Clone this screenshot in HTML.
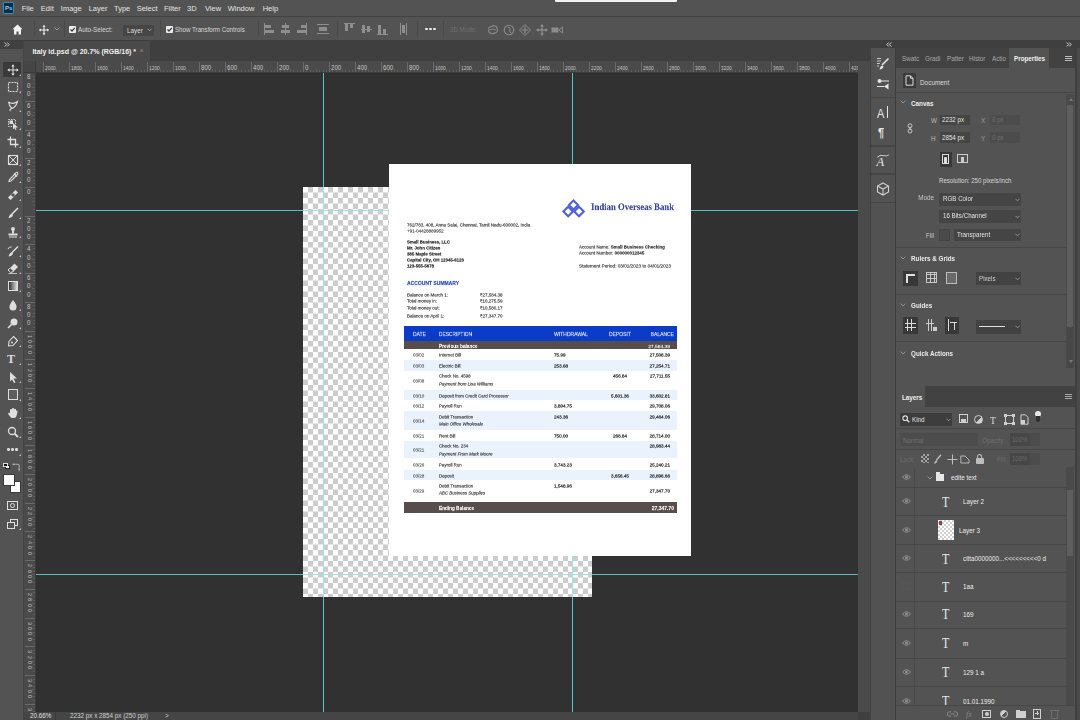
<!DOCTYPE html><html><head><meta charset="utf-8"><style>
*{margin:0;padding:0;box-sizing:border-box}
html,body{width:1080px;height:720px;overflow:hidden;background:#535353;font-family:"Liberation Sans",sans-serif;color:#e6e6e6;position:relative}
div,span,svg{position:absolute}
.t{white-space:nowrap;line-height:1}
.sep{width:1px;background:#4a4a4a}
</style></head><body>
<div style="left:0;top:0;width:1080px;height:16px;background:#535353"></div>
<div style="left:0;top:16px;width:1080px;height:1px;background:#424242"></div>
<div style="left:555px;top:0;width:122px;height:2px;background:#f0f0f0;border-radius:0 0 1px 1px"></div>
<div style="left:3px;top:2px;width:11px;height:12px;background:#0a2a44;border:1px solid #2f8fb8;border-radius:1px"></div>
<span class="t" style="left:5px;top:5px;font-size:6px;font-weight:bold;color:#8fd0ff">Ps</span>
<span class="t" style="left:21.7px;top:5px;font-size:7.5px;color:#e4e4e4">File</span>
<span class="t" style="left:40.8px;top:5px;font-size:7.5px;color:#e4e4e4">Edit</span>
<span class="t" style="left:60.8px;top:5px;font-size:7.5px;color:#e4e4e4">Image</span>
<span class="t" style="left:88.7px;top:5px;font-size:7.5px;color:#e4e4e4">Layer</span>
<span class="t" style="left:114.0px;top:5px;font-size:7.5px;color:#e4e4e4">Type</span>
<span class="t" style="left:136.7px;top:5px;font-size:7.5px;color:#e4e4e4">Select</span>
<span class="t" style="left:164.0px;top:5px;font-size:7.5px;color:#e4e4e4">Filter</span>
<span class="t" style="left:187.0px;top:5px;font-size:7.5px;color:#e4e4e4">3D</span>
<span class="t" style="left:205.0px;top:5px;font-size:7.5px;color:#e4e4e4">View</span>
<span class="t" style="left:227.7px;top:5px;font-size:7.5px;color:#e4e4e4">Window</span>
<span class="t" style="left:262.7px;top:5px;font-size:7.5px;color:#e4e4e4">Help</span>
<div style="left:0;top:17px;width:1080px;height:23px;background:#535353"></div>
<div style="left:0;top:40px;width:1080px;height:1px;background:#3e3e3e"></div>
<div class="sep" style="left:34px;top:20px;height:17px"></div>
<div class="sep" style="left:64px;top:20px;height:17px"></div>
<div class="sep" style="left:160px;top:20px;height:17px"></div>
<div class="sep" style="left:257.5px;top:20px;height:17px"></div>
<div class="sep" style="left:337px;top:20px;height:17px"></div>
<div class="sep" style="left:416.5px;top:20px;height:17px"></div>
<div class="sep" style="left:442.5px;top:20px;height:17px"></div>
<svg style="left:12px;top:24px" width="11" height="11" viewBox="0 0 11 11"><path d="M5.5 0.5 L10.5 5.2 L9 5.2 L9 10.5 L6.5 10.5 L6.5 7.5 L4.5 7.5 L4.5 10.5 L2 10.5 L2 5.2 L0.5 5.2 Z" fill="#f2f2f2"/></svg>
<svg style="left:38.5px;top:24.5px" width="10" height="10" viewBox="0 0 11 11"><path d="M5.5 0.5v10M0.5 5.5h10" stroke="#eee" stroke-width="1.2"/><path d="M5.5 0 L3.8 2 H7.2Z M5.5 11 L3.8 9 H7.2Z M0 5.5 L2 3.8 V7.2Z M11 5.5 L9 3.8 V7.2Z" fill="#eee"/></svg>
<svg style="left:54px;top:27px" width="6" height="4" viewBox="0 0 6 4"><path d="M0.5 0.5 L3 3 L5.5 0.5" stroke="#9a9a9a" fill="none" stroke-width="1"/></svg>
<div style="left:68.5px;top:25.5px;width:7px;height:7px;background:#ececec;border-radius:1px"></div>
<svg style="left:68.5px;top:25.5px" width="7" height="7" viewBox="0 0 7 7"><path d="M1.5 3.5 L3 5 L5.8 1.8" stroke="#3a3a3a" stroke-width="1.2" fill="none"/></svg>
<span class="t" style="left:77.5px;top:26.1px;font-size:7.2px;color:#d8d8d8;transform:scaleX(0.88);transform-origin:0 0">Auto-Select:</span>
<div style="left:122.5px;top:24.5px;width:31px;height:11px;background:#464646"></div>
<span class="t" style="left:127px;top:26.5px;font-size:7px;color:#dcdcdc;transform:scaleX(0.9);transform-origin:0 0">Layer</span>
<svg style="left:147px;top:28px" width="5" height="4" viewBox="0 0 5 4"><path d="M0.5 0.8 L2.5 2.8 L4.5 0.8" stroke="#aaa" fill="none" stroke-width="0.9"/></svg>
<div style="left:165.5px;top:25.5px;width:7px;height:7px;background:#ececec;border-radius:1px"></div>
<svg style="left:165.5px;top:25.5px" width="7" height="7" viewBox="0 0 7 7"><path d="M1.5 3.5 L3 5 L5.8 1.8" stroke="#3a3a3a" stroke-width="1.2" fill="none"/></svg>
<span class="t" style="left:175px;top:26.1px;font-size:7.2px;color:#d8d8d8;transform:scaleX(0.86);transform-origin:0 0">Show Transform Controls</span>
<div style="left:264px;top:23px;width:1px;height:12px;background:#8e8e8e"></div>
<div style="left:265px;top:25px;width:6px;height:3px;background:#8e8e8e"></div>
<div style="left:265px;top:30px;width:9px;height:3px;background:#8e8e8e"></div>
<div style="left:285px;top:23px;width:1px;height:12px;background:#8e8e8e"></div>
<div style="left:282px;top:25px;width:7px;height:3px;background:#8e8e8e"></div>
<div style="left:281px;top:30px;width:9px;height:3px;background:#8e8e8e"></div>
<div style="left:305.5px;top:23px;width:1px;height:12px;background:#8e8e8e"></div>
<div style="left:300.5px;top:25px;width:5px;height:3px;background:#8e8e8e"></div>
<div style="left:296.5px;top:30px;width:9px;height:3px;background:#8e8e8e"></div>
<div style="left:316.5px;top:24px;width:12px;height:1px;background:#8e8e8e"></div>
<div style="left:318.5px;top:27px;width:8px;height:4px;background:#8e8e8e"></div>
<div style="left:316.5px;top:33px;width:12px;height:1px;background:#8e8e8e"></div>
<div style="left:343.5px;top:23px;width:11px;height:1px;background:#8e8e8e"></div>
<div style="left:344.5px;top:24px;width:3px;height:7px;background:#8e8e8e"></div>
<div style="left:349.5px;top:24px;width:3px;height:4px;background:#8e8e8e"></div>
<div style="left:360.6px;top:29px;width:11px;height:1px;background:#8e8e8e"></div>
<div style="left:361.6px;top:25px;width:3px;height:8px;background:#8e8e8e"></div>
<div style="left:366.6px;top:26px;width:3px;height:6px;background:#8e8e8e"></div>
<div style="left:377px;top:34px;width:11px;height:1px;background:#8e8e8e"></div>
<div style="left:378px;top:25px;width:3px;height:9px;background:#8e8e8e"></div>
<div style="left:383px;top:29px;width:3px;height:5px;background:#8e8e8e"></div>
<div style="left:400px;top:23px;width:1px;height:12px;background:#8e8e8e"></div>
<div style="left:402px;top:25px;width:3px;height:8px;background:#8e8e8e"></div>
<div style="left:406px;top:23px;width:1px;height:12px;background:#8e8e8e"></div>
<div style="left:425.1px;top:27.8px;width:2.6px;height:2.6px;border-radius:50%;background:#eee"></div>
<div style="left:429.1px;top:27.8px;width:2.6px;height:2.6px;border-radius:50%;background:#eee"></div>
<div style="left:433.1px;top:27.8px;width:2.6px;height:2.6px;border-radius:50%;background:#eee"></div>
<span class="t" style="left:450px;top:26.2px;font-size:7px;color:#6f6f6f;transform:scaleX(0.88);transform-origin:0 0">3D Mode:</span>
<svg style="left:487px;top:23.5px" width="12" height="12" viewBox="0 0 12 12"><path d="M2 6 Q1 2.5 5 2.5 Q6 1 8 2 Q10.5 2.5 10 5 Q11.5 7 9 8.5 Q6 10.5 3 9 Q1 8 2 6Z" stroke="#8c8c8c" stroke-width="1.1" fill="none"/><path d="M3 6 Q6 4 9 6" stroke="#8c8c8c" stroke-width="0.9" fill="none"/></svg>
<svg style="left:503px;top:23.5px" width="12" height="12" viewBox="0 0 12 12"><circle cx="6" cy="6" r="4.8" stroke="#8c8c8c" stroke-width="1.1" fill="none"/><path d="M4.5 3 Q8 3.5 7 6 Q6 8 8 9" stroke="#8c8c8c" stroke-width="1" fill="none"/></svg>
<svg style="left:519px;top:23.5px" width="12" height="12" viewBox="0 0 12 12"><path d="M6 0.5 L9 3.5 L11.5 6 L9 8.5 L6 11.5 L3 8.5 L0.5 6 L3 3.5Z" stroke="#8c8c8c" stroke-width="1" fill="none"/><path d="M6 2.5 V9.5 M2.5 6 H9.5" stroke="#8c8c8c" stroke-width="1.2"/></svg>
<svg style="left:536px;top:23.5px" width="12" height="12" viewBox="0 0 12 12"><path d="M6 1.5 V10.5 M1.5 6 H10.5" stroke="#8c8c8c" stroke-width="1.3"/><path d="M6 0 L4 2.5 H8Z M6 12 L4 9.5 H8Z M0 6 L2.5 4 V8Z M12 6 L9.5 4 V8Z" fill="#8c8c8c"/></svg>
<svg style="left:551px;top:23.5px" width="12" height="12" viewBox="0 0 12 12"><rect x="0.5" y="3.5" width="7" height="5" fill="#8c8c8c"/><path d="M8 6 L11.5 3 V9Z" stroke="#8c8c8c" stroke-width="1" fill="none"/></svg>
<div style="left:24px;top:41px;width:835px;height:20px;background:#3f3f3f"></div>
<div style="left:24px;top:41px;width:126px;height:20px;background:#4a4a4a"></div>
<span class="t" style="left:32.4px;top:48px;font-size:7px;font-weight:bold;color:#f0f0f0">Italy id.psd @ 20.7% (RGB/16) *</span>
<span class="t" style="left:139.5px;top:47px;font-size:7px;color:#8a8a8a">&#215;</span>
<div style="left:0;top:41px;width:24px;height:679px;background:#535353"></div>
<div style="left:0;top:41px;width:24px;height:8px;background:#404040"></div>
<svg style="left:4px;top:42px" width="6" height="5" viewBox="0 0 6 5"><path d="M0.7 0.5 L2.7 2.5 L0.7 4.5 M3.2 0.5 L5.2 2.5 L3.2 4.5" stroke="#c8c8c8" stroke-width="1" fill="none"/></svg>
<div style="left:23px;top:41px;width:1px;height:679px;background:#444"></div>
<div style="left:3px;top:62px;width:18px;height:15px;background:#3a3a3a;border-radius:1px"></div>
<svg style="left:6.5px;top:63.7px" width="12" height="12" viewBox="0 0 12 12"><path d="M6 1v10M1 6h10" stroke="#dedede" stroke-width="1"/><path d="M6 0.3 L4.3 2.5 H7.7Z M6 11.7 L4.3 9.5 H7.7Z M0.3 6 L2.5 4.3 V7.7Z M11.7 6 L9.5 4.3 V7.7Z" fill="#dedede"/></svg>
<div style="left:18.5px;top:73.7px;width:0;height:0;border-left:2px solid transparent;border-bottom:2px solid #bdbdbd"></div>
<svg style="left:6.5px;top:81.0px" width="12" height="12" viewBox="0 0 12 12"><rect x="1.5" y="1.5" width="9" height="9" stroke="#dedede" stroke-width="1.1" stroke-dasharray="2 1" fill="none"/></svg>
<div style="left:18.5px;top:91.0px;width:0;height:0;border-left:2px solid transparent;border-bottom:2px solid #bdbdbd"></div>
<svg style="left:6.5px;top:99.7px" width="12" height="12" viewBox="0 0 12 12"><path d="M1.5 2 Q6 5 10.5 1.5 Q9 7 5 8.5 Q2 9.5 3.5 11 M1.5 2 Q2 6 5 8.5" stroke="#dedede" stroke-width="1.1" fill="none"/></svg>
<div style="left:18.5px;top:109.7px;width:0;height:0;border-left:2px solid transparent;border-bottom:2px solid #bdbdbd"></div>
<svg style="left:6.5px;top:118.0px" width="12" height="12" viewBox="0 0 12 12"><rect x="1.5" y="1.5" width="7" height="7" stroke="#dedede" stroke-width="0.9" stroke-dasharray="1.5 1" fill="none"/><rect x="2.5" y="2.5" width="3.5" height="3.5" fill="#dedede"/><path d="M6 5 L11 9.5 L8.5 9.5 L9.5 11.5 L8.5 12 L7.5 10 L6 11.5Z" fill="#dedede"/></svg>
<div style="left:18.5px;top:128.0px;width:0;height:0;border-left:2px solid transparent;border-bottom:2px solid #bdbdbd"></div>
<svg style="left:6.5px;top:136.0px" width="12" height="12" viewBox="0 0 12 12"><path d="M3.5 0.5 V8.5 H11.5 M0.5 3.5 H8.5 V11.5" stroke="#dedede" stroke-width="1.3" fill="none"/></svg>
<div style="left:18.5px;top:146.0px;width:0;height:0;border-left:2px solid transparent;border-bottom:2px solid #bdbdbd"></div>
<svg style="left:6.5px;top:153.7px" width="12" height="12" viewBox="0 0 12 12"><rect x="1.5" y="1.5" width="9" height="9" stroke="#dedede" stroke-width="1.1" fill="none"/><path d="M1.5 1.5 L10.5 10.5 M10.5 1.5 L1.5 10.5" stroke="#dedede" stroke-width="1"/></svg>
<div style="left:18.5px;top:163.7px;width:0;height:0;border-left:2px solid transparent;border-bottom:2px solid #bdbdbd"></div>
<svg style="left:6.5px;top:170.7px" width="12" height="12" viewBox="0 0 12 12"><path d="M10.5 1.5 Q11.5 3 9.5 4.5 L4 10 L2 10.5 L2.5 8.5 L8 3 Q9 0.5 10.5 1.5Z" stroke="#dedede" stroke-width="1.1" fill="none"/><path d="M7 2.5 L10 5.5" stroke="#dedede" stroke-width="1.3"/></svg>
<div style="left:18.5px;top:180.7px;width:0;height:0;border-left:2px solid transparent;border-bottom:2px solid #bdbdbd"></div>
<svg style="left:6.5px;top:189.0px" width="12" height="12" viewBox="0 0 12 12"><path d="M8.5 1 L11 3.5 L3.5 11 L1 8.5Z" fill="#dedede"/><rect x="4.5" y="4.5" width="3" height="3" transform="rotate(45 6 6)" fill="#535353"/></svg>
<div style="left:18.5px;top:199.0px;width:0;height:0;border-left:2px solid transparent;border-bottom:2px solid #bdbdbd"></div>
<svg style="left:6.5px;top:207.3px" width="12" height="12" viewBox="0 0 12 12"><path d="M11 1 L5 7" stroke="#dedede" stroke-width="1.6"/><path d="M5 6.5 Q2.5 7 1.5 11 Q5.5 10.5 6 8Z" fill="#dedede"/></svg>
<div style="left:18.5px;top:217.3px;width:0;height:0;border-left:2px solid transparent;border-bottom:2px solid #bdbdbd"></div>
<svg style="left:6.5px;top:225.7px" width="12" height="12" viewBox="0 0 12 12"><circle cx="6" cy="3" r="2" fill="#dedede"/><rect x="5" y="4.5" width="2" height="3" fill="#dedede"/><rect x="1.5" y="7.5" width="9" height="2" fill="#dedede"/><rect x="2" y="10.5" width="8" height="1" fill="#dedede"/></svg>
<div style="left:18.5px;top:235.7px;width:0;height:0;border-left:2px solid transparent;border-bottom:2px solid #bdbdbd"></div>
<svg style="left:6.5px;top:244.7px" width="12" height="12" viewBox="0 0 12 12"><path d="M11 1.5 L5 7.5" stroke="#dedede" stroke-width="1.5"/><path d="M5 7 Q2.5 7.5 1.5 11.5 Q5.5 11 6 8.5Z" fill="#dedede"/><path d="M1 4 Q2 1.5 4.5 2" stroke="#dedede" stroke-width="1" fill="none"/></svg>
<div style="left:18.5px;top:254.7px;width:0;height:0;border-left:2px solid transparent;border-bottom:2px solid #bdbdbd"></div>
<svg style="left:6.5px;top:262.3px" width="12" height="12" viewBox="0 0 12 12"><path d="M7.5 1.5 L11 5 L6.5 9.5 L3 6Z" fill="#dedede"/><path d="M3 6 L1 8 L3.5 10.5 L6.5 9.5" stroke="#dedede" stroke-width="1" fill="none"/><path d="M1.5 11.5 H10" stroke="#dedede" stroke-width="0.8"/></svg>
<div style="left:18.5px;top:272.3px;width:0;height:0;border-left:2px solid transparent;border-bottom:2px solid #bdbdbd"></div>
<div style="left:7.5px;top:280.5px;width:10.5px;height:10.5px;border:1px solid #dedede;background:linear-gradient(90deg,#333,#ddd)"></div>
<div style="left:18.5px;top:289.7px;width:0;height:0;border-left:2px solid transparent;border-bottom:2px solid #bdbdbd"></div>
<svg style="left:6.5px;top:298.5px" width="12" height="12" viewBox="0 0 12 12"><path d="M6 1 Q10 6 9.5 8 A3.5 3.5 0 0 1 2.5 8 Q2 6 6 1Z" fill="#dedede"/></svg>
<div style="left:18.5px;top:308.5px;width:0;height:0;border-left:2px solid transparent;border-bottom:2px solid #bdbdbd"></div>
<svg style="left:6.5px;top:316.5px" width="12" height="12" viewBox="0 0 12 12"><circle cx="7" cy="5" r="3.5" fill="#dedede"/><path d="M4.5 7.5 L1 11" stroke="#dedede" stroke-width="1.6"/></svg>
<div style="left:18.5px;top:326.5px;width:0;height:0;border-left:2px solid transparent;border-bottom:2px solid #bdbdbd"></div>
<svg style="left:6.5px;top:335.2px" width="12" height="12" viewBox="0 0 12 12"><path d="M6.5 1.5 L10.5 5.5 L6 10.5 L1.5 11 L2 6.5Z" stroke="#dedede" stroke-width="1.1" fill="none"/><circle cx="5" cy="7.5" r="1" fill="#dedede"/></svg>
<div style="left:18.5px;top:345.2px;width:0;height:0;border-left:2px solid transparent;border-bottom:2px solid #bdbdbd"></div>
<span class="t" style="left:7px;top:353px;font-size:12px;font-weight:bold;font-family:Liberation Serif;color:#dedede">T</span>
<div style="left:18.5px;top:363.2px;width:0;height:0;border-left:2px solid transparent;border-bottom:2px solid #bdbdbd"></div>
<svg style="left:6.5px;top:370.9px" width="12" height="12" viewBox="0 0 12 12"><path d="M3 1 L10 7.5 L6.5 7.5 L8.5 11.5 L7 12 L5 8.5 L3 10.5Z" fill="#dedede"/></svg>
<div style="left:18.5px;top:380.9px;width:0;height:0;border-left:2px solid transparent;border-bottom:2px solid #bdbdbd"></div>
<div style="left:7.5px;top:389px;width:10.5px;height:10.5px;border:1px solid #dedede;background:#5d5d5d"></div>
<div style="left:18.5px;top:398.5px;width:0;height:0;border-left:2px solid transparent;border-bottom:2px solid #bdbdbd"></div>
<svg style="left:6.5px;top:407.0px" width="12" height="12" viewBox="0 0 12 12"><path d="M3 6 V3 Q3 2 4 2 Q5 2 5 3 V1.8 Q5 1 6 1 Q7 1 7 2 V2.5 Q7.2 1.8 8 1.8 Q9 1.8 9 3 V4 Q9.3 3.3 10 3.5 Q10.8 3.8 10.5 5 L9.5 9 Q9 11 7 11 H5.5 Q4 11 3 9.5 L1.2 7 Q0.8 6 1.8 5.7 Q2.5 5.5 3 6Z" fill="#dedede"/></svg>
<div style="left:18.5px;top:417.0px;width:0;height:0;border-left:2px solid transparent;border-bottom:2px solid #bdbdbd"></div>
<svg style="left:6.5px;top:425.5px" width="12" height="12" viewBox="0 0 12 12"><circle cx="5" cy="5" r="3.5" stroke="#dedede" stroke-width="1.3" fill="none"/><path d="M7.5 7.5 L11 11" stroke="#dedede" stroke-width="1.8"/></svg>
<div style="left:18.5px;top:435.5px;width:0;height:0;border-left:2px solid transparent;border-bottom:2px solid #bdbdbd"></div>
<div style="left:7.3px;top:448.3px;width:2.4px;height:2.4px;border-radius:50%;background:#dedede"></div>
<div style="left:11.3px;top:448.3px;width:2.4px;height:2.4px;border-radius:50%;background:#dedede"></div>
<div style="left:15.3px;top:448.3px;width:2.4px;height:2.4px;border-radius:50%;background:#dedede"></div>
<div style="left:18.5px;top:453.6px;width:0;height:0;border-left:2px solid transparent;border-bottom:2px solid #bdbdbd"></div>
<div style="left:5px;top:464.5px;width:4.5px;height:4.5px;background:#fff;border:0.5px solid #222"></div><div style="left:3px;top:462.5px;width:4.5px;height:4.5px;background:#111;border:0.6px solid #ddd"></div>
<svg style="left:12px;top:461.5px" width="9" height="9" viewBox="0 0 12 12"><path d="M2 3 H8 Q9.5 3 9.5 4.5 V10" stroke="#dedede" stroke-width="0.9" fill="none"/><path d="M2 1.5 V4.5 L0.5 3Z M8 10 H11 L9.5 11.5Z" fill="#dedede"/></svg>
<div style="left:9.5px;top:480.5px;width:11.5px;height:12.5px;background:#fff;border:1px solid #3a3a3a"></div>
<div style="left:3px;top:473.5px;width:11.5px;height:12.5px;background:#fff;border:1px solid #3a3a3a"></div>
<div style="left:7px;top:500.5px;width:11px;height:9.5px;border:1px solid #dedede"></div><div style="left:10px;top:502.5px;width:5px;height:5px;border:1px solid #dedede;border-radius:50%"></div>
<div style="left:9.5px;top:519px;width:8.5px;height:7px;border:1px solid #dedede"></div><div style="left:6.5px;top:522px;width:8.5px;height:7px;border:1px solid #dedede;background:#535353"></div>
<div style="left:18.5px;top:527.5px;width:0;height:0;border-left:2px solid transparent;border-bottom:2px solid #bdbdbd"></div>
<div style="left:24px;top:61px;width:836px;height:12px;background:#4a4a4a"></div>
<div style="left:24px;top:61px;width:12px;height:651px;background:#4a4a4a"></div>
<div style="left:24px;top:61px;width:12px;height:12px;background:#454545"></div>
<div style="left:24px;top:72px;width:836px;height:1px;background:#3a3a3a"></div>
<div style="left:35px;top:61px;width:1px;height:651px;background:#3a3a3a"></div>
<div style="left:43.0px;top:62px;width:1px;height:10px;background:#6a6a6a"></div>
<span class="t" style="left:44.5px;top:66.0px;font-size:5.4px;color:#c4c4c4;transform:scaleX(0.9);transform-origin:0 0">2000</span>
<div style="left:46.2px;top:70px;width:1px;height:2px;background:#5c5c5c"></div>
<div style="left:49.5px;top:70px;width:1px;height:2px;background:#5c5c5c"></div>
<div style="left:52.8px;top:70px;width:1px;height:2px;background:#5c5c5c"></div>
<div style="left:56.0px;top:69px;width:1px;height:3px;background:#5c5c5c"></div>
<div style="left:59.2px;top:70px;width:1px;height:2px;background:#5c5c5c"></div>
<div style="left:62.5px;top:70px;width:1px;height:2px;background:#5c5c5c"></div>
<div style="left:65.8px;top:70px;width:1px;height:2px;background:#5c5c5c"></div>
<div style="left:69.0px;top:62px;width:1px;height:10px;background:#6a6a6a"></div>
<span class="t" style="left:70.5px;top:66.0px;font-size:5.4px;color:#c4c4c4;transform:scaleX(0.9);transform-origin:0 0">1800</span>
<div style="left:72.2px;top:70px;width:1px;height:2px;background:#5c5c5c"></div>
<div style="left:75.5px;top:70px;width:1px;height:2px;background:#5c5c5c"></div>
<div style="left:78.8px;top:70px;width:1px;height:2px;background:#5c5c5c"></div>
<div style="left:82.0px;top:69px;width:1px;height:3px;background:#5c5c5c"></div>
<div style="left:85.2px;top:70px;width:1px;height:2px;background:#5c5c5c"></div>
<div style="left:88.5px;top:70px;width:1px;height:2px;background:#5c5c5c"></div>
<div style="left:91.8px;top:70px;width:1px;height:2px;background:#5c5c5c"></div>
<div style="left:95.0px;top:62px;width:1px;height:10px;background:#6a6a6a"></div>
<span class="t" style="left:96.5px;top:66.0px;font-size:5.4px;color:#c4c4c4;transform:scaleX(0.9);transform-origin:0 0">1600</span>
<div style="left:98.2px;top:70px;width:1px;height:2px;background:#5c5c5c"></div>
<div style="left:101.5px;top:70px;width:1px;height:2px;background:#5c5c5c"></div>
<div style="left:104.8px;top:70px;width:1px;height:2px;background:#5c5c5c"></div>
<div style="left:108.0px;top:69px;width:1px;height:3px;background:#5c5c5c"></div>
<div style="left:111.2px;top:70px;width:1px;height:2px;background:#5c5c5c"></div>
<div style="left:114.5px;top:70px;width:1px;height:2px;background:#5c5c5c"></div>
<div style="left:117.8px;top:70px;width:1px;height:2px;background:#5c5c5c"></div>
<div style="left:121.0px;top:62px;width:1px;height:10px;background:#6a6a6a"></div>
<span class="t" style="left:122.5px;top:66.0px;font-size:5.4px;color:#c4c4c4;transform:scaleX(0.9);transform-origin:0 0">1400</span>
<div style="left:124.2px;top:70px;width:1px;height:2px;background:#5c5c5c"></div>
<div style="left:127.5px;top:70px;width:1px;height:2px;background:#5c5c5c"></div>
<div style="left:130.8px;top:70px;width:1px;height:2px;background:#5c5c5c"></div>
<div style="left:134.0px;top:69px;width:1px;height:3px;background:#5c5c5c"></div>
<div style="left:137.2px;top:70px;width:1px;height:2px;background:#5c5c5c"></div>
<div style="left:140.5px;top:70px;width:1px;height:2px;background:#5c5c5c"></div>
<div style="left:143.8px;top:70px;width:1px;height:2px;background:#5c5c5c"></div>
<div style="left:147.0px;top:62px;width:1px;height:10px;background:#6a6a6a"></div>
<span class="t" style="left:148.5px;top:66.0px;font-size:5.4px;color:#c4c4c4;transform:scaleX(0.9);transform-origin:0 0">1200</span>
<div style="left:150.2px;top:70px;width:1px;height:2px;background:#5c5c5c"></div>
<div style="left:153.5px;top:70px;width:1px;height:2px;background:#5c5c5c"></div>
<div style="left:156.8px;top:70px;width:1px;height:2px;background:#5c5c5c"></div>
<div style="left:160.0px;top:69px;width:1px;height:3px;background:#5c5c5c"></div>
<div style="left:163.2px;top:70px;width:1px;height:2px;background:#5c5c5c"></div>
<div style="left:166.5px;top:70px;width:1px;height:2px;background:#5c5c5c"></div>
<div style="left:169.8px;top:70px;width:1px;height:2px;background:#5c5c5c"></div>
<div style="left:173.0px;top:62px;width:1px;height:10px;background:#6a6a6a"></div>
<span class="t" style="left:174.5px;top:66.0px;font-size:5.4px;color:#c4c4c4;transform:scaleX(0.9);transform-origin:0 0">1000</span>
<div style="left:176.2px;top:70px;width:1px;height:2px;background:#5c5c5c"></div>
<div style="left:179.5px;top:70px;width:1px;height:2px;background:#5c5c5c"></div>
<div style="left:182.8px;top:70px;width:1px;height:2px;background:#5c5c5c"></div>
<div style="left:186.0px;top:69px;width:1px;height:3px;background:#5c5c5c"></div>
<div style="left:189.2px;top:70px;width:1px;height:2px;background:#5c5c5c"></div>
<div style="left:192.5px;top:70px;width:1px;height:2px;background:#5c5c5c"></div>
<div style="left:195.8px;top:70px;width:1px;height:2px;background:#5c5c5c"></div>
<div style="left:199.0px;top:62px;width:1px;height:10px;background:#6a6a6a"></div>
<span class="t" style="left:200.5px;top:65.2px;font-size:6.8px;color:#c4c4c4;transform:scaleX(0.9);transform-origin:0 0">800</span>
<div style="left:202.2px;top:70px;width:1px;height:2px;background:#5c5c5c"></div>
<div style="left:205.5px;top:70px;width:1px;height:2px;background:#5c5c5c"></div>
<div style="left:208.8px;top:70px;width:1px;height:2px;background:#5c5c5c"></div>
<div style="left:212.0px;top:69px;width:1px;height:3px;background:#5c5c5c"></div>
<div style="left:215.2px;top:70px;width:1px;height:2px;background:#5c5c5c"></div>
<div style="left:218.5px;top:70px;width:1px;height:2px;background:#5c5c5c"></div>
<div style="left:221.8px;top:70px;width:1px;height:2px;background:#5c5c5c"></div>
<div style="left:225.0px;top:62px;width:1px;height:10px;background:#6a6a6a"></div>
<span class="t" style="left:226.5px;top:65.2px;font-size:6.8px;color:#c4c4c4;transform:scaleX(0.9);transform-origin:0 0">600</span>
<div style="left:228.2px;top:70px;width:1px;height:2px;background:#5c5c5c"></div>
<div style="left:231.5px;top:70px;width:1px;height:2px;background:#5c5c5c"></div>
<div style="left:234.8px;top:70px;width:1px;height:2px;background:#5c5c5c"></div>
<div style="left:238.0px;top:69px;width:1px;height:3px;background:#5c5c5c"></div>
<div style="left:241.2px;top:70px;width:1px;height:2px;background:#5c5c5c"></div>
<div style="left:244.5px;top:70px;width:1px;height:2px;background:#5c5c5c"></div>
<div style="left:247.8px;top:70px;width:1px;height:2px;background:#5c5c5c"></div>
<div style="left:251.0px;top:62px;width:1px;height:10px;background:#6a6a6a"></div>
<span class="t" style="left:252.5px;top:65.2px;font-size:6.8px;color:#c4c4c4;transform:scaleX(0.9);transform-origin:0 0">400</span>
<div style="left:254.2px;top:70px;width:1px;height:2px;background:#5c5c5c"></div>
<div style="left:257.5px;top:70px;width:1px;height:2px;background:#5c5c5c"></div>
<div style="left:260.8px;top:70px;width:1px;height:2px;background:#5c5c5c"></div>
<div style="left:264.0px;top:69px;width:1px;height:3px;background:#5c5c5c"></div>
<div style="left:267.2px;top:70px;width:1px;height:2px;background:#5c5c5c"></div>
<div style="left:270.5px;top:70px;width:1px;height:2px;background:#5c5c5c"></div>
<div style="left:273.8px;top:70px;width:1px;height:2px;background:#5c5c5c"></div>
<div style="left:277.0px;top:62px;width:1px;height:10px;background:#6a6a6a"></div>
<span class="t" style="left:278.5px;top:65.2px;font-size:6.8px;color:#c4c4c4;transform:scaleX(0.9);transform-origin:0 0">200</span>
<div style="left:280.2px;top:70px;width:1px;height:2px;background:#5c5c5c"></div>
<div style="left:283.5px;top:70px;width:1px;height:2px;background:#5c5c5c"></div>
<div style="left:286.8px;top:70px;width:1px;height:2px;background:#5c5c5c"></div>
<div style="left:290.0px;top:69px;width:1px;height:3px;background:#5c5c5c"></div>
<div style="left:293.2px;top:70px;width:1px;height:2px;background:#5c5c5c"></div>
<div style="left:296.5px;top:70px;width:1px;height:2px;background:#5c5c5c"></div>
<div style="left:299.8px;top:70px;width:1px;height:2px;background:#5c5c5c"></div>
<div style="left:303.0px;top:62px;width:1px;height:10px;background:#6a6a6a"></div>
<span class="t" style="left:304.5px;top:65.2px;font-size:6.8px;color:#c4c4c4;transform:scaleX(0.9);transform-origin:0 0">0</span>
<div style="left:306.2px;top:70px;width:1px;height:2px;background:#5c5c5c"></div>
<div style="left:309.5px;top:70px;width:1px;height:2px;background:#5c5c5c"></div>
<div style="left:312.8px;top:70px;width:1px;height:2px;background:#5c5c5c"></div>
<div style="left:316.0px;top:69px;width:1px;height:3px;background:#5c5c5c"></div>
<div style="left:319.2px;top:70px;width:1px;height:2px;background:#5c5c5c"></div>
<div style="left:322.5px;top:70px;width:1px;height:2px;background:#5c5c5c"></div>
<div style="left:325.8px;top:70px;width:1px;height:2px;background:#5c5c5c"></div>
<div style="left:329.0px;top:62px;width:1px;height:10px;background:#6a6a6a"></div>
<span class="t" style="left:330.5px;top:65.2px;font-size:6.8px;color:#c4c4c4;transform:scaleX(0.9);transform-origin:0 0">200</span>
<div style="left:332.2px;top:70px;width:1px;height:2px;background:#5c5c5c"></div>
<div style="left:335.5px;top:70px;width:1px;height:2px;background:#5c5c5c"></div>
<div style="left:338.8px;top:70px;width:1px;height:2px;background:#5c5c5c"></div>
<div style="left:342.0px;top:69px;width:1px;height:3px;background:#5c5c5c"></div>
<div style="left:345.2px;top:70px;width:1px;height:2px;background:#5c5c5c"></div>
<div style="left:348.5px;top:70px;width:1px;height:2px;background:#5c5c5c"></div>
<div style="left:351.8px;top:70px;width:1px;height:2px;background:#5c5c5c"></div>
<div style="left:355.0px;top:62px;width:1px;height:10px;background:#6a6a6a"></div>
<span class="t" style="left:356.5px;top:65.2px;font-size:6.8px;color:#c4c4c4;transform:scaleX(0.9);transform-origin:0 0">400</span>
<div style="left:358.2px;top:70px;width:1px;height:2px;background:#5c5c5c"></div>
<div style="left:361.5px;top:70px;width:1px;height:2px;background:#5c5c5c"></div>
<div style="left:364.8px;top:70px;width:1px;height:2px;background:#5c5c5c"></div>
<div style="left:368.0px;top:69px;width:1px;height:3px;background:#5c5c5c"></div>
<div style="left:371.2px;top:70px;width:1px;height:2px;background:#5c5c5c"></div>
<div style="left:374.5px;top:70px;width:1px;height:2px;background:#5c5c5c"></div>
<div style="left:377.8px;top:70px;width:1px;height:2px;background:#5c5c5c"></div>
<div style="left:381.0px;top:62px;width:1px;height:10px;background:#6a6a6a"></div>
<span class="t" style="left:382.5px;top:65.2px;font-size:6.8px;color:#c4c4c4;transform:scaleX(0.9);transform-origin:0 0">600</span>
<div style="left:384.2px;top:70px;width:1px;height:2px;background:#5c5c5c"></div>
<div style="left:387.5px;top:70px;width:1px;height:2px;background:#5c5c5c"></div>
<div style="left:390.8px;top:70px;width:1px;height:2px;background:#5c5c5c"></div>
<div style="left:394.0px;top:69px;width:1px;height:3px;background:#5c5c5c"></div>
<div style="left:397.2px;top:70px;width:1px;height:2px;background:#5c5c5c"></div>
<div style="left:400.5px;top:70px;width:1px;height:2px;background:#5c5c5c"></div>
<div style="left:403.8px;top:70px;width:1px;height:2px;background:#5c5c5c"></div>
<div style="left:407.0px;top:62px;width:1px;height:10px;background:#6a6a6a"></div>
<span class="t" style="left:408.5px;top:65.2px;font-size:6.8px;color:#c4c4c4;transform:scaleX(0.9);transform-origin:0 0">800</span>
<div style="left:410.2px;top:70px;width:1px;height:2px;background:#5c5c5c"></div>
<div style="left:413.5px;top:70px;width:1px;height:2px;background:#5c5c5c"></div>
<div style="left:416.8px;top:70px;width:1px;height:2px;background:#5c5c5c"></div>
<div style="left:420.0px;top:69px;width:1px;height:3px;background:#5c5c5c"></div>
<div style="left:423.2px;top:70px;width:1px;height:2px;background:#5c5c5c"></div>
<div style="left:426.5px;top:70px;width:1px;height:2px;background:#5c5c5c"></div>
<div style="left:429.8px;top:70px;width:1px;height:2px;background:#5c5c5c"></div>
<div style="left:433.0px;top:62px;width:1px;height:10px;background:#6a6a6a"></div>
<span class="t" style="left:434.5px;top:66.0px;font-size:5.4px;color:#c4c4c4;transform:scaleX(0.9);transform-origin:0 0">1000</span>
<div style="left:436.2px;top:70px;width:1px;height:2px;background:#5c5c5c"></div>
<div style="left:439.5px;top:70px;width:1px;height:2px;background:#5c5c5c"></div>
<div style="left:442.8px;top:70px;width:1px;height:2px;background:#5c5c5c"></div>
<div style="left:446.0px;top:69px;width:1px;height:3px;background:#5c5c5c"></div>
<div style="left:449.2px;top:70px;width:1px;height:2px;background:#5c5c5c"></div>
<div style="left:452.5px;top:70px;width:1px;height:2px;background:#5c5c5c"></div>
<div style="left:455.8px;top:70px;width:1px;height:2px;background:#5c5c5c"></div>
<div style="left:459.0px;top:62px;width:1px;height:10px;background:#6a6a6a"></div>
<span class="t" style="left:460.5px;top:66.0px;font-size:5.4px;color:#c4c4c4;transform:scaleX(0.9);transform-origin:0 0">1200</span>
<div style="left:462.2px;top:70px;width:1px;height:2px;background:#5c5c5c"></div>
<div style="left:465.5px;top:70px;width:1px;height:2px;background:#5c5c5c"></div>
<div style="left:468.8px;top:70px;width:1px;height:2px;background:#5c5c5c"></div>
<div style="left:472.0px;top:69px;width:1px;height:3px;background:#5c5c5c"></div>
<div style="left:475.2px;top:70px;width:1px;height:2px;background:#5c5c5c"></div>
<div style="left:478.5px;top:70px;width:1px;height:2px;background:#5c5c5c"></div>
<div style="left:481.8px;top:70px;width:1px;height:2px;background:#5c5c5c"></div>
<div style="left:485.0px;top:62px;width:1px;height:10px;background:#6a6a6a"></div>
<span class="t" style="left:486.5px;top:66.0px;font-size:5.4px;color:#c4c4c4;transform:scaleX(0.9);transform-origin:0 0">1400</span>
<div style="left:488.2px;top:70px;width:1px;height:2px;background:#5c5c5c"></div>
<div style="left:491.5px;top:70px;width:1px;height:2px;background:#5c5c5c"></div>
<div style="left:494.8px;top:70px;width:1px;height:2px;background:#5c5c5c"></div>
<div style="left:498.0px;top:69px;width:1px;height:3px;background:#5c5c5c"></div>
<div style="left:501.2px;top:70px;width:1px;height:2px;background:#5c5c5c"></div>
<div style="left:504.5px;top:70px;width:1px;height:2px;background:#5c5c5c"></div>
<div style="left:507.8px;top:70px;width:1px;height:2px;background:#5c5c5c"></div>
<div style="left:511.0px;top:62px;width:1px;height:10px;background:#6a6a6a"></div>
<span class="t" style="left:512.5px;top:66.0px;font-size:5.4px;color:#c4c4c4;transform:scaleX(0.9);transform-origin:0 0">1600</span>
<div style="left:514.2px;top:70px;width:1px;height:2px;background:#5c5c5c"></div>
<div style="left:517.5px;top:70px;width:1px;height:2px;background:#5c5c5c"></div>
<div style="left:520.8px;top:70px;width:1px;height:2px;background:#5c5c5c"></div>
<div style="left:524.0px;top:69px;width:1px;height:3px;background:#5c5c5c"></div>
<div style="left:527.2px;top:70px;width:1px;height:2px;background:#5c5c5c"></div>
<div style="left:530.5px;top:70px;width:1px;height:2px;background:#5c5c5c"></div>
<div style="left:533.8px;top:70px;width:1px;height:2px;background:#5c5c5c"></div>
<div style="left:537.0px;top:62px;width:1px;height:10px;background:#6a6a6a"></div>
<span class="t" style="left:538.5px;top:66.0px;font-size:5.4px;color:#c4c4c4;transform:scaleX(0.9);transform-origin:0 0">1800</span>
<div style="left:540.2px;top:70px;width:1px;height:2px;background:#5c5c5c"></div>
<div style="left:543.5px;top:70px;width:1px;height:2px;background:#5c5c5c"></div>
<div style="left:546.8px;top:70px;width:1px;height:2px;background:#5c5c5c"></div>
<div style="left:550.0px;top:69px;width:1px;height:3px;background:#5c5c5c"></div>
<div style="left:553.2px;top:70px;width:1px;height:2px;background:#5c5c5c"></div>
<div style="left:556.5px;top:70px;width:1px;height:2px;background:#5c5c5c"></div>
<div style="left:559.8px;top:70px;width:1px;height:2px;background:#5c5c5c"></div>
<div style="left:563.0px;top:62px;width:1px;height:10px;background:#6a6a6a"></div>
<span class="t" style="left:564.5px;top:66.0px;font-size:5.4px;color:#c4c4c4;transform:scaleX(0.9);transform-origin:0 0">2000</span>
<div style="left:566.2px;top:70px;width:1px;height:2px;background:#5c5c5c"></div>
<div style="left:569.5px;top:70px;width:1px;height:2px;background:#5c5c5c"></div>
<div style="left:572.8px;top:70px;width:1px;height:2px;background:#5c5c5c"></div>
<div style="left:576.0px;top:69px;width:1px;height:3px;background:#5c5c5c"></div>
<div style="left:579.2px;top:70px;width:1px;height:2px;background:#5c5c5c"></div>
<div style="left:582.5px;top:70px;width:1px;height:2px;background:#5c5c5c"></div>
<div style="left:585.8px;top:70px;width:1px;height:2px;background:#5c5c5c"></div>
<div style="left:589.0px;top:62px;width:1px;height:10px;background:#6a6a6a"></div>
<span class="t" style="left:590.5px;top:66.0px;font-size:5.4px;color:#c4c4c4;transform:scaleX(0.9);transform-origin:0 0">2200</span>
<div style="left:592.2px;top:70px;width:1px;height:2px;background:#5c5c5c"></div>
<div style="left:595.5px;top:70px;width:1px;height:2px;background:#5c5c5c"></div>
<div style="left:598.8px;top:70px;width:1px;height:2px;background:#5c5c5c"></div>
<div style="left:602.0px;top:69px;width:1px;height:3px;background:#5c5c5c"></div>
<div style="left:605.2px;top:70px;width:1px;height:2px;background:#5c5c5c"></div>
<div style="left:608.5px;top:70px;width:1px;height:2px;background:#5c5c5c"></div>
<div style="left:611.8px;top:70px;width:1px;height:2px;background:#5c5c5c"></div>
<div style="left:615.0px;top:62px;width:1px;height:10px;background:#6a6a6a"></div>
<span class="t" style="left:616.5px;top:66.0px;font-size:5.4px;color:#c4c4c4;transform:scaleX(0.9);transform-origin:0 0">2400</span>
<div style="left:618.2px;top:70px;width:1px;height:2px;background:#5c5c5c"></div>
<div style="left:621.5px;top:70px;width:1px;height:2px;background:#5c5c5c"></div>
<div style="left:624.8px;top:70px;width:1px;height:2px;background:#5c5c5c"></div>
<div style="left:628.0px;top:69px;width:1px;height:3px;background:#5c5c5c"></div>
<div style="left:631.2px;top:70px;width:1px;height:2px;background:#5c5c5c"></div>
<div style="left:634.5px;top:70px;width:1px;height:2px;background:#5c5c5c"></div>
<div style="left:637.8px;top:70px;width:1px;height:2px;background:#5c5c5c"></div>
<div style="left:641.0px;top:62px;width:1px;height:10px;background:#6a6a6a"></div>
<span class="t" style="left:642.5px;top:66.0px;font-size:5.4px;color:#c4c4c4;transform:scaleX(0.9);transform-origin:0 0">2600</span>
<div style="left:644.2px;top:70px;width:1px;height:2px;background:#5c5c5c"></div>
<div style="left:647.5px;top:70px;width:1px;height:2px;background:#5c5c5c"></div>
<div style="left:650.8px;top:70px;width:1px;height:2px;background:#5c5c5c"></div>
<div style="left:654.0px;top:69px;width:1px;height:3px;background:#5c5c5c"></div>
<div style="left:657.2px;top:70px;width:1px;height:2px;background:#5c5c5c"></div>
<div style="left:660.5px;top:70px;width:1px;height:2px;background:#5c5c5c"></div>
<div style="left:663.8px;top:70px;width:1px;height:2px;background:#5c5c5c"></div>
<div style="left:667.0px;top:62px;width:1px;height:10px;background:#6a6a6a"></div>
<span class="t" style="left:668.5px;top:66.0px;font-size:5.4px;color:#c4c4c4;transform:scaleX(0.9);transform-origin:0 0">2800</span>
<div style="left:670.2px;top:70px;width:1px;height:2px;background:#5c5c5c"></div>
<div style="left:673.5px;top:70px;width:1px;height:2px;background:#5c5c5c"></div>
<div style="left:676.8px;top:70px;width:1px;height:2px;background:#5c5c5c"></div>
<div style="left:680.0px;top:69px;width:1px;height:3px;background:#5c5c5c"></div>
<div style="left:683.2px;top:70px;width:1px;height:2px;background:#5c5c5c"></div>
<div style="left:686.5px;top:70px;width:1px;height:2px;background:#5c5c5c"></div>
<div style="left:689.8px;top:70px;width:1px;height:2px;background:#5c5c5c"></div>
<div style="left:693.0px;top:62px;width:1px;height:10px;background:#6a6a6a"></div>
<span class="t" style="left:694.5px;top:66.0px;font-size:5.4px;color:#c4c4c4;transform:scaleX(0.9);transform-origin:0 0">3000</span>
<div style="left:696.2px;top:70px;width:1px;height:2px;background:#5c5c5c"></div>
<div style="left:699.5px;top:70px;width:1px;height:2px;background:#5c5c5c"></div>
<div style="left:702.8px;top:70px;width:1px;height:2px;background:#5c5c5c"></div>
<div style="left:706.0px;top:69px;width:1px;height:3px;background:#5c5c5c"></div>
<div style="left:709.2px;top:70px;width:1px;height:2px;background:#5c5c5c"></div>
<div style="left:712.5px;top:70px;width:1px;height:2px;background:#5c5c5c"></div>
<div style="left:715.8px;top:70px;width:1px;height:2px;background:#5c5c5c"></div>
<div style="left:719.0px;top:62px;width:1px;height:10px;background:#6a6a6a"></div>
<span class="t" style="left:720.5px;top:66.0px;font-size:5.4px;color:#c4c4c4;transform:scaleX(0.9);transform-origin:0 0">3200</span>
<div style="left:722.2px;top:70px;width:1px;height:2px;background:#5c5c5c"></div>
<div style="left:725.5px;top:70px;width:1px;height:2px;background:#5c5c5c"></div>
<div style="left:728.8px;top:70px;width:1px;height:2px;background:#5c5c5c"></div>
<div style="left:732.0px;top:69px;width:1px;height:3px;background:#5c5c5c"></div>
<div style="left:735.2px;top:70px;width:1px;height:2px;background:#5c5c5c"></div>
<div style="left:738.5px;top:70px;width:1px;height:2px;background:#5c5c5c"></div>
<div style="left:741.8px;top:70px;width:1px;height:2px;background:#5c5c5c"></div>
<div style="left:745.0px;top:62px;width:1px;height:10px;background:#6a6a6a"></div>
<span class="t" style="left:746.5px;top:66.0px;font-size:5.4px;color:#c4c4c4;transform:scaleX(0.9);transform-origin:0 0">3400</span>
<div style="left:748.2px;top:70px;width:1px;height:2px;background:#5c5c5c"></div>
<div style="left:751.5px;top:70px;width:1px;height:2px;background:#5c5c5c"></div>
<div style="left:754.8px;top:70px;width:1px;height:2px;background:#5c5c5c"></div>
<div style="left:758.0px;top:69px;width:1px;height:3px;background:#5c5c5c"></div>
<div style="left:761.2px;top:70px;width:1px;height:2px;background:#5c5c5c"></div>
<div style="left:764.5px;top:70px;width:1px;height:2px;background:#5c5c5c"></div>
<div style="left:767.8px;top:70px;width:1px;height:2px;background:#5c5c5c"></div>
<div style="left:771.0px;top:62px;width:1px;height:10px;background:#6a6a6a"></div>
<span class="t" style="left:772.5px;top:66.0px;font-size:5.4px;color:#c4c4c4;transform:scaleX(0.9);transform-origin:0 0">3600</span>
<div style="left:774.2px;top:70px;width:1px;height:2px;background:#5c5c5c"></div>
<div style="left:777.5px;top:70px;width:1px;height:2px;background:#5c5c5c"></div>
<div style="left:780.8px;top:70px;width:1px;height:2px;background:#5c5c5c"></div>
<div style="left:784.0px;top:69px;width:1px;height:3px;background:#5c5c5c"></div>
<div style="left:787.2px;top:70px;width:1px;height:2px;background:#5c5c5c"></div>
<div style="left:790.5px;top:70px;width:1px;height:2px;background:#5c5c5c"></div>
<div style="left:793.8px;top:70px;width:1px;height:2px;background:#5c5c5c"></div>
<div style="left:797.0px;top:62px;width:1px;height:10px;background:#6a6a6a"></div>
<span class="t" style="left:798.5px;top:66.0px;font-size:5.4px;color:#c4c4c4;transform:scaleX(0.9);transform-origin:0 0">3800</span>
<div style="left:800.2px;top:70px;width:1px;height:2px;background:#5c5c5c"></div>
<div style="left:803.5px;top:70px;width:1px;height:2px;background:#5c5c5c"></div>
<div style="left:806.8px;top:70px;width:1px;height:2px;background:#5c5c5c"></div>
<div style="left:810.0px;top:69px;width:1px;height:3px;background:#5c5c5c"></div>
<div style="left:813.2px;top:70px;width:1px;height:2px;background:#5c5c5c"></div>
<div style="left:816.5px;top:70px;width:1px;height:2px;background:#5c5c5c"></div>
<div style="left:819.8px;top:70px;width:1px;height:2px;background:#5c5c5c"></div>
<div style="left:823.0px;top:62px;width:1px;height:10px;background:#6a6a6a"></div>
<span class="t" style="left:824.5px;top:66.0px;font-size:5.4px;color:#c4c4c4;transform:scaleX(0.9);transform-origin:0 0">4000</span>
<div style="left:826.2px;top:70px;width:1px;height:2px;background:#5c5c5c"></div>
<div style="left:829.5px;top:70px;width:1px;height:2px;background:#5c5c5c"></div>
<div style="left:832.8px;top:70px;width:1px;height:2px;background:#5c5c5c"></div>
<div style="left:836.0px;top:69px;width:1px;height:3px;background:#5c5c5c"></div>
<div style="left:839.2px;top:70px;width:1px;height:2px;background:#5c5c5c"></div>
<div style="left:842.5px;top:70px;width:1px;height:2px;background:#5c5c5c"></div>
<div style="left:845.8px;top:70px;width:1px;height:2px;background:#5c5c5c"></div>
<div style="left:849.0px;top:62px;width:1px;height:10px;background:#6a6a6a"></div>
<span class="t" style="left:850.5px;top:66.0px;font-size:5.4px;color:#c4c4c4;transform:scaleX(0.9);transform-origin:0 0">4200</span>
<div style="left:852.2px;top:70px;width:1px;height:2px;background:#5c5c5c"></div>
<div style="left:855.5px;top:70px;width:1px;height:2px;background:#5c5c5c"></div>
<span class="t" style="left:27px;top:74.2px;font-size:6.8px;color:#c4c4c4;transform:scaleX(0.9);transform-origin:0 0">8</span>
<span class="t" style="left:27px;top:82.5px;font-size:6.8px;color:#c4c4c4;transform:scaleX(0.9);transform-origin:0 0">0</span>
<span class="t" style="left:27px;top:90.8px;font-size:6.8px;color:#c4c4c4;transform:scaleX(0.9);transform-origin:0 0">0</span>
<div style="left:33px;top:75.8px;width:2px;height:1px;background:#5c5c5c"></div>
<div style="left:33px;top:79.4px;width:2px;height:1px;background:#5c5c5c"></div>
<div style="left:33px;top:83.0px;width:2px;height:1px;background:#5c5c5c"></div>
<div style="left:32px;top:86.5px;width:3px;height:1px;background:#5c5c5c"></div>
<div style="left:33px;top:90.1px;width:2px;height:1px;background:#5c5c5c"></div>
<div style="left:33px;top:93.7px;width:2px;height:1px;background:#5c5c5c"></div>
<div style="left:33px;top:97.3px;width:2px;height:1px;background:#5c5c5c"></div>
<div style="left:25px;top:100.9px;width:10px;height:1px;background:#6a6a6a"></div>
<span class="t" style="left:27px;top:102.9px;font-size:6.8px;color:#c4c4c4;transform:scaleX(0.9);transform-origin:0 0">6</span>
<span class="t" style="left:27px;top:111.2px;font-size:6.8px;color:#c4c4c4;transform:scaleX(0.9);transform-origin:0 0">0</span>
<span class="t" style="left:27px;top:119.5px;font-size:6.8px;color:#c4c4c4;transform:scaleX(0.9);transform-origin:0 0">0</span>
<div style="left:33px;top:104.5px;width:2px;height:1px;background:#5c5c5c"></div>
<div style="left:33px;top:108.1px;width:2px;height:1px;background:#5c5c5c"></div>
<div style="left:33px;top:111.7px;width:2px;height:1px;background:#5c5c5c"></div>
<div style="left:32px;top:115.2px;width:3px;height:1px;background:#5c5c5c"></div>
<div style="left:33px;top:118.8px;width:2px;height:1px;background:#5c5c5c"></div>
<div style="left:33px;top:122.4px;width:2px;height:1px;background:#5c5c5c"></div>
<div style="left:33px;top:126.0px;width:2px;height:1px;background:#5c5c5c"></div>
<div style="left:25px;top:129.6px;width:10px;height:1px;background:#6a6a6a"></div>
<span class="t" style="left:27px;top:131.6px;font-size:6.8px;color:#c4c4c4;transform:scaleX(0.9);transform-origin:0 0">4</span>
<span class="t" style="left:27px;top:139.9px;font-size:6.8px;color:#c4c4c4;transform:scaleX(0.9);transform-origin:0 0">0</span>
<span class="t" style="left:27px;top:148.2px;font-size:6.8px;color:#c4c4c4;transform:scaleX(0.9);transform-origin:0 0">0</span>
<div style="left:33px;top:133.2px;width:2px;height:1px;background:#5c5c5c"></div>
<div style="left:33px;top:136.8px;width:2px;height:1px;background:#5c5c5c"></div>
<div style="left:33px;top:140.4px;width:2px;height:1px;background:#5c5c5c"></div>
<div style="left:32px;top:143.9px;width:3px;height:1px;background:#5c5c5c"></div>
<div style="left:33px;top:147.5px;width:2px;height:1px;background:#5c5c5c"></div>
<div style="left:33px;top:151.1px;width:2px;height:1px;background:#5c5c5c"></div>
<div style="left:33px;top:154.7px;width:2px;height:1px;background:#5c5c5c"></div>
<div style="left:25px;top:158.3px;width:10px;height:1px;background:#6a6a6a"></div>
<span class="t" style="left:27px;top:160.3px;font-size:6.8px;color:#c4c4c4;transform:scaleX(0.9);transform-origin:0 0">2</span>
<span class="t" style="left:27px;top:168.6px;font-size:6.8px;color:#c4c4c4;transform:scaleX(0.9);transform-origin:0 0">0</span>
<span class="t" style="left:27px;top:176.9px;font-size:6.8px;color:#c4c4c4;transform:scaleX(0.9);transform-origin:0 0">0</span>
<div style="left:33px;top:161.9px;width:2px;height:1px;background:#5c5c5c"></div>
<div style="left:33px;top:165.5px;width:2px;height:1px;background:#5c5c5c"></div>
<div style="left:33px;top:169.1px;width:2px;height:1px;background:#5c5c5c"></div>
<div style="left:32px;top:172.7px;width:3px;height:1px;background:#5c5c5c"></div>
<div style="left:33px;top:176.2px;width:2px;height:1px;background:#5c5c5c"></div>
<div style="left:33px;top:179.8px;width:2px;height:1px;background:#5c5c5c"></div>
<div style="left:33px;top:183.4px;width:2px;height:1px;background:#5c5c5c"></div>
<div style="left:25px;top:187.0px;width:10px;height:1px;background:#6a6a6a"></div>
<span class="t" style="left:27px;top:189.0px;font-size:6.8px;color:#c4c4c4;transform:scaleX(0.9);transform-origin:0 0">0</span>
<div style="left:33px;top:190.6px;width:2px;height:1px;background:#5c5c5c"></div>
<div style="left:33px;top:194.2px;width:2px;height:1px;background:#5c5c5c"></div>
<div style="left:33px;top:197.8px;width:2px;height:1px;background:#5c5c5c"></div>
<div style="left:32px;top:201.3px;width:3px;height:1px;background:#5c5c5c"></div>
<div style="left:33px;top:204.9px;width:2px;height:1px;background:#5c5c5c"></div>
<div style="left:33px;top:208.5px;width:2px;height:1px;background:#5c5c5c"></div>
<div style="left:33px;top:212.1px;width:2px;height:1px;background:#5c5c5c"></div>
<div style="left:25px;top:215.7px;width:10px;height:1px;background:#6a6a6a"></div>
<span class="t" style="left:27px;top:217.7px;font-size:6.8px;color:#c4c4c4;transform:scaleX(0.9);transform-origin:0 0">2</span>
<span class="t" style="left:27px;top:226.0px;font-size:6.8px;color:#c4c4c4;transform:scaleX(0.9);transform-origin:0 0">0</span>
<span class="t" style="left:27px;top:234.3px;font-size:6.8px;color:#c4c4c4;transform:scaleX(0.9);transform-origin:0 0">0</span>
<div style="left:33px;top:219.3px;width:2px;height:1px;background:#5c5c5c"></div>
<div style="left:33px;top:222.9px;width:2px;height:1px;background:#5c5c5c"></div>
<div style="left:33px;top:226.5px;width:2px;height:1px;background:#5c5c5c"></div>
<div style="left:32px;top:230.0px;width:3px;height:1px;background:#5c5c5c"></div>
<div style="left:33px;top:233.6px;width:2px;height:1px;background:#5c5c5c"></div>
<div style="left:33px;top:237.2px;width:2px;height:1px;background:#5c5c5c"></div>
<div style="left:33px;top:240.8px;width:2px;height:1px;background:#5c5c5c"></div>
<div style="left:25px;top:244.4px;width:10px;height:1px;background:#6a6a6a"></div>
<span class="t" style="left:27px;top:246.4px;font-size:6.8px;color:#c4c4c4;transform:scaleX(0.9);transform-origin:0 0">4</span>
<span class="t" style="left:27px;top:254.7px;font-size:6.8px;color:#c4c4c4;transform:scaleX(0.9);transform-origin:0 0">0</span>
<span class="t" style="left:27px;top:263.0px;font-size:6.8px;color:#c4c4c4;transform:scaleX(0.9);transform-origin:0 0">0</span>
<div style="left:33px;top:248.0px;width:2px;height:1px;background:#5c5c5c"></div>
<div style="left:33px;top:251.6px;width:2px;height:1px;background:#5c5c5c"></div>
<div style="left:33px;top:255.2px;width:2px;height:1px;background:#5c5c5c"></div>
<div style="left:32px;top:258.8px;width:3px;height:1px;background:#5c5c5c"></div>
<div style="left:33px;top:262.3px;width:2px;height:1px;background:#5c5c5c"></div>
<div style="left:33px;top:265.9px;width:2px;height:1px;background:#5c5c5c"></div>
<div style="left:33px;top:269.5px;width:2px;height:1px;background:#5c5c5c"></div>
<div style="left:25px;top:273.1px;width:10px;height:1px;background:#6a6a6a"></div>
<span class="t" style="left:27px;top:275.1px;font-size:6.8px;color:#c4c4c4;transform:scaleX(0.9);transform-origin:0 0">6</span>
<span class="t" style="left:27px;top:283.4px;font-size:6.8px;color:#c4c4c4;transform:scaleX(0.9);transform-origin:0 0">0</span>
<span class="t" style="left:27px;top:291.7px;font-size:6.8px;color:#c4c4c4;transform:scaleX(0.9);transform-origin:0 0">0</span>
<div style="left:33px;top:276.7px;width:2px;height:1px;background:#5c5c5c"></div>
<div style="left:33px;top:280.3px;width:2px;height:1px;background:#5c5c5c"></div>
<div style="left:33px;top:283.9px;width:2px;height:1px;background:#5c5c5c"></div>
<div style="left:32px;top:287.5px;width:3px;height:1px;background:#5c5c5c"></div>
<div style="left:33px;top:291.0px;width:2px;height:1px;background:#5c5c5c"></div>
<div style="left:33px;top:294.6px;width:2px;height:1px;background:#5c5c5c"></div>
<div style="left:33px;top:298.2px;width:2px;height:1px;background:#5c5c5c"></div>
<div style="left:25px;top:301.8px;width:10px;height:1px;background:#6a6a6a"></div>
<span class="t" style="left:27px;top:303.8px;font-size:6.8px;color:#c4c4c4;transform:scaleX(0.9);transform-origin:0 0">8</span>
<span class="t" style="left:27px;top:312.1px;font-size:6.8px;color:#c4c4c4;transform:scaleX(0.9);transform-origin:0 0">0</span>
<span class="t" style="left:27px;top:320.4px;font-size:6.8px;color:#c4c4c4;transform:scaleX(0.9);transform-origin:0 0">0</span>
<div style="left:33px;top:305.4px;width:2px;height:1px;background:#5c5c5c"></div>
<div style="left:33px;top:309.0px;width:2px;height:1px;background:#5c5c5c"></div>
<div style="left:33px;top:312.6px;width:2px;height:1px;background:#5c5c5c"></div>
<div style="left:32px;top:316.2px;width:3px;height:1px;background:#5c5c5c"></div>
<div style="left:33px;top:319.7px;width:2px;height:1px;background:#5c5c5c"></div>
<div style="left:33px;top:323.3px;width:2px;height:1px;background:#5c5c5c"></div>
<div style="left:33px;top:326.9px;width:2px;height:1px;background:#5c5c5c"></div>
<div style="left:25px;top:330.5px;width:10px;height:1px;background:#6a6a6a"></div>
<span class="t" style="left:26.8px;top:334.5px;font-size:5.4px;color:#c4c4c4;transform:rotate(90deg);transform-origin:2.7px 2.7px">1</span>
<span class="t" style="left:26.8px;top:339.9px;font-size:5.4px;color:#c4c4c4;transform:rotate(90deg);transform-origin:2.7px 2.7px">0</span>
<span class="t" style="left:26.8px;top:345.3px;font-size:5.4px;color:#c4c4c4;transform:rotate(90deg);transform-origin:2.7px 2.7px">0</span>
<span class="t" style="left:26.8px;top:350.7px;font-size:5.4px;color:#c4c4c4;transform:rotate(90deg);transform-origin:2.7px 2.7px">0</span>
<div style="left:33px;top:334.1px;width:2px;height:1px;background:#5c5c5c"></div>
<div style="left:33px;top:337.7px;width:2px;height:1px;background:#5c5c5c"></div>
<div style="left:33px;top:341.3px;width:2px;height:1px;background:#5c5c5c"></div>
<div style="left:32px;top:344.9px;width:3px;height:1px;background:#5c5c5c"></div>
<div style="left:33px;top:348.4px;width:2px;height:1px;background:#5c5c5c"></div>
<div style="left:33px;top:352.0px;width:2px;height:1px;background:#5c5c5c"></div>
<div style="left:33px;top:355.6px;width:2px;height:1px;background:#5c5c5c"></div>
<div style="left:25px;top:359.2px;width:10px;height:1px;background:#6a6a6a"></div>
<span class="t" style="left:26.8px;top:363.2px;font-size:5.4px;color:#c4c4c4;transform:rotate(90deg);transform-origin:2.7px 2.7px">1</span>
<span class="t" style="left:26.8px;top:368.6px;font-size:5.4px;color:#c4c4c4;transform:rotate(90deg);transform-origin:2.7px 2.7px">2</span>
<span class="t" style="left:26.8px;top:374.0px;font-size:5.4px;color:#c4c4c4;transform:rotate(90deg);transform-origin:2.7px 2.7px">0</span>
<span class="t" style="left:26.8px;top:379.4px;font-size:5.4px;color:#c4c4c4;transform:rotate(90deg);transform-origin:2.7px 2.7px">0</span>
<div style="left:33px;top:362.8px;width:2px;height:1px;background:#5c5c5c"></div>
<div style="left:33px;top:366.4px;width:2px;height:1px;background:#5c5c5c"></div>
<div style="left:33px;top:370.0px;width:2px;height:1px;background:#5c5c5c"></div>
<div style="left:32px;top:373.6px;width:3px;height:1px;background:#5c5c5c"></div>
<div style="left:33px;top:377.1px;width:2px;height:1px;background:#5c5c5c"></div>
<div style="left:33px;top:380.7px;width:2px;height:1px;background:#5c5c5c"></div>
<div style="left:33px;top:384.3px;width:2px;height:1px;background:#5c5c5c"></div>
<div style="left:25px;top:387.9px;width:10px;height:1px;background:#6a6a6a"></div>
<span class="t" style="left:26.8px;top:391.9px;font-size:5.4px;color:#c4c4c4;transform:rotate(90deg);transform-origin:2.7px 2.7px">1</span>
<span class="t" style="left:26.8px;top:397.3px;font-size:5.4px;color:#c4c4c4;transform:rotate(90deg);transform-origin:2.7px 2.7px">4</span>
<span class="t" style="left:26.8px;top:402.7px;font-size:5.4px;color:#c4c4c4;transform:rotate(90deg);transform-origin:2.7px 2.7px">0</span>
<span class="t" style="left:26.8px;top:408.1px;font-size:5.4px;color:#c4c4c4;transform:rotate(90deg);transform-origin:2.7px 2.7px">0</span>
<div style="left:33px;top:391.5px;width:2px;height:1px;background:#5c5c5c"></div>
<div style="left:33px;top:395.1px;width:2px;height:1px;background:#5c5c5c"></div>
<div style="left:33px;top:398.7px;width:2px;height:1px;background:#5c5c5c"></div>
<div style="left:32px;top:402.2px;width:3px;height:1px;background:#5c5c5c"></div>
<div style="left:33px;top:405.8px;width:2px;height:1px;background:#5c5c5c"></div>
<div style="left:33px;top:409.4px;width:2px;height:1px;background:#5c5c5c"></div>
<div style="left:33px;top:413.0px;width:2px;height:1px;background:#5c5c5c"></div>
<div style="left:25px;top:416.6px;width:10px;height:1px;background:#6a6a6a"></div>
<span class="t" style="left:26.8px;top:420.6px;font-size:5.4px;color:#c4c4c4;transform:rotate(90deg);transform-origin:2.7px 2.7px">1</span>
<span class="t" style="left:26.8px;top:426.0px;font-size:5.4px;color:#c4c4c4;transform:rotate(90deg);transform-origin:2.7px 2.7px">6</span>
<span class="t" style="left:26.8px;top:431.4px;font-size:5.4px;color:#c4c4c4;transform:rotate(90deg);transform-origin:2.7px 2.7px">0</span>
<span class="t" style="left:26.8px;top:436.8px;font-size:5.4px;color:#c4c4c4;transform:rotate(90deg);transform-origin:2.7px 2.7px">0</span>
<div style="left:33px;top:420.2px;width:2px;height:1px;background:#5c5c5c"></div>
<div style="left:33px;top:423.8px;width:2px;height:1px;background:#5c5c5c"></div>
<div style="left:33px;top:427.4px;width:2px;height:1px;background:#5c5c5c"></div>
<div style="left:32px;top:431.0px;width:3px;height:1px;background:#5c5c5c"></div>
<div style="left:33px;top:434.5px;width:2px;height:1px;background:#5c5c5c"></div>
<div style="left:33px;top:438.1px;width:2px;height:1px;background:#5c5c5c"></div>
<div style="left:33px;top:441.7px;width:2px;height:1px;background:#5c5c5c"></div>
<div style="left:25px;top:445.3px;width:10px;height:1px;background:#6a6a6a"></div>
<span class="t" style="left:26.8px;top:449.3px;font-size:5.4px;color:#c4c4c4;transform:rotate(90deg);transform-origin:2.7px 2.7px">1</span>
<span class="t" style="left:26.8px;top:454.7px;font-size:5.4px;color:#c4c4c4;transform:rotate(90deg);transform-origin:2.7px 2.7px">8</span>
<span class="t" style="left:26.8px;top:460.1px;font-size:5.4px;color:#c4c4c4;transform:rotate(90deg);transform-origin:2.7px 2.7px">0</span>
<span class="t" style="left:26.8px;top:465.5px;font-size:5.4px;color:#c4c4c4;transform:rotate(90deg);transform-origin:2.7px 2.7px">0</span>
<div style="left:33px;top:448.9px;width:2px;height:1px;background:#5c5c5c"></div>
<div style="left:33px;top:452.5px;width:2px;height:1px;background:#5c5c5c"></div>
<div style="left:33px;top:456.1px;width:2px;height:1px;background:#5c5c5c"></div>
<div style="left:32px;top:459.7px;width:3px;height:1px;background:#5c5c5c"></div>
<div style="left:33px;top:463.2px;width:2px;height:1px;background:#5c5c5c"></div>
<div style="left:33px;top:466.8px;width:2px;height:1px;background:#5c5c5c"></div>
<div style="left:33px;top:470.4px;width:2px;height:1px;background:#5c5c5c"></div>
<div style="left:25px;top:474.0px;width:10px;height:1px;background:#6a6a6a"></div>
<span class="t" style="left:26.8px;top:478.0px;font-size:5.4px;color:#c4c4c4;transform:rotate(90deg);transform-origin:2.7px 2.7px">2</span>
<span class="t" style="left:26.8px;top:483.4px;font-size:5.4px;color:#c4c4c4;transform:rotate(90deg);transform-origin:2.7px 2.7px">0</span>
<span class="t" style="left:26.8px;top:488.8px;font-size:5.4px;color:#c4c4c4;transform:rotate(90deg);transform-origin:2.7px 2.7px">0</span>
<span class="t" style="left:26.8px;top:494.2px;font-size:5.4px;color:#c4c4c4;transform:rotate(90deg);transform-origin:2.7px 2.7px">0</span>
<div style="left:33px;top:477.6px;width:2px;height:1px;background:#5c5c5c"></div>
<div style="left:33px;top:481.2px;width:2px;height:1px;background:#5c5c5c"></div>
<div style="left:33px;top:484.8px;width:2px;height:1px;background:#5c5c5c"></div>
<div style="left:32px;top:488.4px;width:3px;height:1px;background:#5c5c5c"></div>
<div style="left:33px;top:491.9px;width:2px;height:1px;background:#5c5c5c"></div>
<div style="left:33px;top:495.5px;width:2px;height:1px;background:#5c5c5c"></div>
<div style="left:33px;top:499.1px;width:2px;height:1px;background:#5c5c5c"></div>
<div style="left:25px;top:502.7px;width:10px;height:1px;background:#6a6a6a"></div>
<span class="t" style="left:26.8px;top:506.7px;font-size:5.4px;color:#c4c4c4;transform:rotate(90deg);transform-origin:2.7px 2.7px">2</span>
<span class="t" style="left:26.8px;top:512.1px;font-size:5.4px;color:#c4c4c4;transform:rotate(90deg);transform-origin:2.7px 2.7px">2</span>
<span class="t" style="left:26.8px;top:517.5px;font-size:5.4px;color:#c4c4c4;transform:rotate(90deg);transform-origin:2.7px 2.7px">0</span>
<span class="t" style="left:26.8px;top:522.9px;font-size:5.4px;color:#c4c4c4;transform:rotate(90deg);transform-origin:2.7px 2.7px">0</span>
<div style="left:33px;top:506.3px;width:2px;height:1px;background:#5c5c5c"></div>
<div style="left:33px;top:509.9px;width:2px;height:1px;background:#5c5c5c"></div>
<div style="left:33px;top:513.5px;width:2px;height:1px;background:#5c5c5c"></div>
<div style="left:32px;top:517.0px;width:3px;height:1px;background:#5c5c5c"></div>
<div style="left:33px;top:520.6px;width:2px;height:1px;background:#5c5c5c"></div>
<div style="left:33px;top:524.2px;width:2px;height:1px;background:#5c5c5c"></div>
<div style="left:33px;top:527.8px;width:2px;height:1px;background:#5c5c5c"></div>
<div style="left:25px;top:531.4px;width:10px;height:1px;background:#6a6a6a"></div>
<span class="t" style="left:26.8px;top:535.4px;font-size:5.4px;color:#c4c4c4;transform:rotate(90deg);transform-origin:2.7px 2.7px">2</span>
<span class="t" style="left:26.8px;top:540.8px;font-size:5.4px;color:#c4c4c4;transform:rotate(90deg);transform-origin:2.7px 2.7px">4</span>
<span class="t" style="left:26.8px;top:546.2px;font-size:5.4px;color:#c4c4c4;transform:rotate(90deg);transform-origin:2.7px 2.7px">0</span>
<span class="t" style="left:26.8px;top:551.6px;font-size:5.4px;color:#c4c4c4;transform:rotate(90deg);transform-origin:2.7px 2.7px">0</span>
<div style="left:33px;top:535.0px;width:2px;height:1px;background:#5c5c5c"></div>
<div style="left:33px;top:538.6px;width:2px;height:1px;background:#5c5c5c"></div>
<div style="left:33px;top:542.2px;width:2px;height:1px;background:#5c5c5c"></div>
<div style="left:32px;top:545.8px;width:3px;height:1px;background:#5c5c5c"></div>
<div style="left:33px;top:549.3px;width:2px;height:1px;background:#5c5c5c"></div>
<div style="left:33px;top:552.9px;width:2px;height:1px;background:#5c5c5c"></div>
<div style="left:33px;top:556.5px;width:2px;height:1px;background:#5c5c5c"></div>
<div style="left:25px;top:560.1px;width:10px;height:1px;background:#6a6a6a"></div>
<span class="t" style="left:26.8px;top:564.1px;font-size:5.4px;color:#c4c4c4;transform:rotate(90deg);transform-origin:2.7px 2.7px">2</span>
<span class="t" style="left:26.8px;top:569.5px;font-size:5.4px;color:#c4c4c4;transform:rotate(90deg);transform-origin:2.7px 2.7px">6</span>
<span class="t" style="left:26.8px;top:574.9px;font-size:5.4px;color:#c4c4c4;transform:rotate(90deg);transform-origin:2.7px 2.7px">0</span>
<span class="t" style="left:26.8px;top:580.3px;font-size:5.4px;color:#c4c4c4;transform:rotate(90deg);transform-origin:2.7px 2.7px">0</span>
<div style="left:33px;top:563.7px;width:2px;height:1px;background:#5c5c5c"></div>
<div style="left:33px;top:567.3px;width:2px;height:1px;background:#5c5c5c"></div>
<div style="left:33px;top:570.9px;width:2px;height:1px;background:#5c5c5c"></div>
<div style="left:32px;top:574.4px;width:3px;height:1px;background:#5c5c5c"></div>
<div style="left:33px;top:578.0px;width:2px;height:1px;background:#5c5c5c"></div>
<div style="left:33px;top:581.6px;width:2px;height:1px;background:#5c5c5c"></div>
<div style="left:33px;top:585.2px;width:2px;height:1px;background:#5c5c5c"></div>
<div style="left:25px;top:588.8px;width:10px;height:1px;background:#6a6a6a"></div>
<span class="t" style="left:26.8px;top:592.8px;font-size:5.4px;color:#c4c4c4;transform:rotate(90deg);transform-origin:2.7px 2.7px">2</span>
<span class="t" style="left:26.8px;top:598.2px;font-size:5.4px;color:#c4c4c4;transform:rotate(90deg);transform-origin:2.7px 2.7px">8</span>
<span class="t" style="left:26.8px;top:603.6px;font-size:5.4px;color:#c4c4c4;transform:rotate(90deg);transform-origin:2.7px 2.7px">0</span>
<span class="t" style="left:26.8px;top:609.0px;font-size:5.4px;color:#c4c4c4;transform:rotate(90deg);transform-origin:2.7px 2.7px">0</span>
<div style="left:33px;top:592.4px;width:2px;height:1px;background:#5c5c5c"></div>
<div style="left:33px;top:596.0px;width:2px;height:1px;background:#5c5c5c"></div>
<div style="left:33px;top:599.6px;width:2px;height:1px;background:#5c5c5c"></div>
<div style="left:32px;top:603.1px;width:3px;height:1px;background:#5c5c5c"></div>
<div style="left:33px;top:606.7px;width:2px;height:1px;background:#5c5c5c"></div>
<div style="left:33px;top:610.3px;width:2px;height:1px;background:#5c5c5c"></div>
<div style="left:33px;top:613.9px;width:2px;height:1px;background:#5c5c5c"></div>
<div style="left:25px;top:617.5px;width:10px;height:1px;background:#6a6a6a"></div>
<span class="t" style="left:26.8px;top:621.5px;font-size:5.4px;color:#c4c4c4;transform:rotate(90deg);transform-origin:2.7px 2.7px">3</span>
<span class="t" style="left:26.8px;top:626.9px;font-size:5.4px;color:#c4c4c4;transform:rotate(90deg);transform-origin:2.7px 2.7px">0</span>
<span class="t" style="left:26.8px;top:632.3px;font-size:5.4px;color:#c4c4c4;transform:rotate(90deg);transform-origin:2.7px 2.7px">0</span>
<span class="t" style="left:26.8px;top:637.7px;font-size:5.4px;color:#c4c4c4;transform:rotate(90deg);transform-origin:2.7px 2.7px">0</span>
<div style="left:33px;top:621.1px;width:2px;height:1px;background:#5c5c5c"></div>
<div style="left:33px;top:624.7px;width:2px;height:1px;background:#5c5c5c"></div>
<div style="left:33px;top:628.3px;width:2px;height:1px;background:#5c5c5c"></div>
<div style="left:32px;top:631.9px;width:3px;height:1px;background:#5c5c5c"></div>
<div style="left:33px;top:635.4px;width:2px;height:1px;background:#5c5c5c"></div>
<div style="left:33px;top:639.0px;width:2px;height:1px;background:#5c5c5c"></div>
<div style="left:33px;top:642.6px;width:2px;height:1px;background:#5c5c5c"></div>
<div style="left:25px;top:646.2px;width:10px;height:1px;background:#6a6a6a"></div>
<span class="t" style="left:26.8px;top:650.2px;font-size:5.4px;color:#c4c4c4;transform:rotate(90deg);transform-origin:2.7px 2.7px">3</span>
<span class="t" style="left:26.8px;top:655.6px;font-size:5.4px;color:#c4c4c4;transform:rotate(90deg);transform-origin:2.7px 2.7px">2</span>
<span class="t" style="left:26.8px;top:661.0px;font-size:5.4px;color:#c4c4c4;transform:rotate(90deg);transform-origin:2.7px 2.7px">0</span>
<span class="t" style="left:26.8px;top:666.4px;font-size:5.4px;color:#c4c4c4;transform:rotate(90deg);transform-origin:2.7px 2.7px">0</span>
<div style="left:33px;top:649.8px;width:2px;height:1px;background:#5c5c5c"></div>
<div style="left:33px;top:653.4px;width:2px;height:1px;background:#5c5c5c"></div>
<div style="left:33px;top:657.0px;width:2px;height:1px;background:#5c5c5c"></div>
<div style="left:32px;top:660.6px;width:3px;height:1px;background:#5c5c5c"></div>
<div style="left:33px;top:664.1px;width:2px;height:1px;background:#5c5c5c"></div>
<div style="left:33px;top:667.7px;width:2px;height:1px;background:#5c5c5c"></div>
<div style="left:33px;top:671.3px;width:2px;height:1px;background:#5c5c5c"></div>
<div style="left:25px;top:674.9px;width:10px;height:1px;background:#6a6a6a"></div>
<span class="t" style="left:26.8px;top:678.9px;font-size:5.4px;color:#c4c4c4;transform:rotate(90deg);transform-origin:2.7px 2.7px">3</span>
<span class="t" style="left:26.8px;top:684.3px;font-size:5.4px;color:#c4c4c4;transform:rotate(90deg);transform-origin:2.7px 2.7px">4</span>
<span class="t" style="left:26.8px;top:689.7px;font-size:5.4px;color:#c4c4c4;transform:rotate(90deg);transform-origin:2.7px 2.7px">0</span>
<span class="t" style="left:26.8px;top:695.1px;font-size:5.4px;color:#c4c4c4;transform:rotate(90deg);transform-origin:2.7px 2.7px">0</span>
<div style="left:33px;top:678.5px;width:2px;height:1px;background:#5c5c5c"></div>
<div style="left:33px;top:682.1px;width:2px;height:1px;background:#5c5c5c"></div>
<div style="left:33px;top:685.7px;width:2px;height:1px;background:#5c5c5c"></div>
<div style="left:32px;top:689.2px;width:3px;height:1px;background:#5c5c5c"></div>
<div style="left:33px;top:692.8px;width:2px;height:1px;background:#5c5c5c"></div>
<div style="left:33px;top:696.4px;width:2px;height:1px;background:#5c5c5c"></div>
<div style="left:33px;top:700.0px;width:2px;height:1px;background:#5c5c5c"></div>
<div style="left:25px;top:703.6px;width:10px;height:1px;background:#6a6a6a"></div>
<span class="t" style="left:26.8px;top:707.6px;font-size:5.4px;color:#c4c4c4;transform:rotate(90deg);transform-origin:2.7px 2.7px">3</span>
<div style="left:33px;top:707.2px;width:2px;height:1px;background:#5c5c5c"></div>
<div style="left:33px;top:710.8px;width:2px;height:1px;background:#5c5c5c"></div>
<div style="left:24px;top:712px;width:835px;height:8px;background:#454545"></div>
<span class="t" style="left:30px;top:713px;font-size:6.3px;color:#e0e0e0">20.66%</span>
<div style="left:55px;top:712px;width:1px;height:8px;background:#3a3a3a"></div>
<span class="t" style="left:70px;top:713px;font-size:6.3px;color:#d0d0d0">2232 px x 2854 px (250 ppi)</span>
<span class="t" style="left:165px;top:713px;font-size:6.3px;color:#d0d0d0">&gt;</span>
<div style="left:36px;top:73px;width:823px;height:639px;background:#313131"></div>
<div style="left:303px;top:187px;width:289px;height:410px;background-color:#fff;background-image:linear-gradient(45deg,#cccccc 25%,transparent 25%,transparent 75%,#cccccc 75%),linear-gradient(45deg,#cccccc 25%,transparent 25%,transparent 75%,#cccccc 75%);background-size:10px 11px;background-position:0 0,5px 5.5px"></div>
<div style="left:323px;top:73px;width:1px;height:639px;background:#4fc4c0"></div>
<div style="left:572px;top:73px;width:1px;height:639px;background:#4fc4c0"></div>
<div style="left:36px;top:210px;width:823px;height:1px;background:#4fc4c0"></div>
<div style="left:36px;top:574px;width:823px;height:1px;background:#4fc4c0"></div>
<div style="left:323px;top:187px;width:1px;height:410px;background:#9ae6e4"></div>
<div style="left:572px;top:556px;width:1px;height:41px;background:#9ae6e4"></div>
<div style="left:303px;top:210px;width:86px;height:1px;background:#9ae6e4"></div>
<div style="left:303px;top:574px;width:289px;height:1px;background:#9ae6e4"></div>
<div id="docwrap" style="left:0;top:0;width:1080px;height:720px;filter:blur(0.3px)">
<div id="doc" style="left:389px;top:164px;width:302px;height:392px;background:#fff"></div>
<svg style="left:558px;top:195px" width="32" height="26" viewBox="0 0 32 26"><g fill="none" stroke="#5060d6" stroke-width="2.1" stroke-linejoin="miter"><path d="M15.5 5.5 L20 10 L15.5 14.5 L11 10Z"/><path d="M10.2 11.7 L15 16.5 L10.2 21.3 L5.4 16.5Z"/><path d="M21 11.7 L25.8 16.5 L21 21.3 L16.2 16.5Z"/></g></svg>
<span class="t" style="left:590.50px;top:202.42px;font-size:19.20px;color:#3a48a8;font-weight:bold;font-style:normal;-webkit-text-stroke:0.3px #3a48a8;font-family:Liberation Serif,serif;transform:scale(0.4550,0.5);transform-origin:0 0;will-change:transform">Indian Overseas Bank</span>
<span class="t" style="left:406.80px;top:222.65px;font-size:9.00px;color:#333;font-weight:normal;font-style:normal;-webkit-text-stroke:0.3px #333;;transform:scale(0.5000,0.5);transform-origin:0 0;will-change:transform">762/783, 408, Anna Salai, Chennai, Tamil Nadu-600002, India</span>
<span class="t" style="left:406.80px;top:228.65px;font-size:9.00px;color:#444;font-weight:normal;font-style:normal;-webkit-text-stroke:0.3px #444;;transform:scale(0.5000,0.5);transform-origin:0 0;will-change:transform">+91-04428889952</span>
<span class="t" style="left:406.80px;top:239.59px;font-size:8.70px;color:#222;font-weight:bold;font-style:normal;-webkit-text-stroke:0.3px #222;;transform:scale(0.5000,0.5);transform-origin:0 0;will-change:transform">Small Business, LLC</span>
<span class="t" style="left:406.80px;top:245.59px;font-size:8.70px;color:#222;font-weight:bold;font-style:normal;-webkit-text-stroke:0.3px #222;;transform:scale(0.5000,0.5);transform-origin:0 0;will-change:transform">Mr. John Citizen</span>
<span class="t" style="left:406.80px;top:251.59px;font-size:8.70px;color:#222;font-weight:bold;font-style:normal;-webkit-text-stroke:0.3px #222;;transform:scale(0.5000,0.5);transform-origin:0 0;will-change:transform">385 Maple Street</span>
<span class="t" style="left:406.80px;top:257.59px;font-size:8.70px;color:#222;font-weight:bold;font-style:normal;-webkit-text-stroke:0.3px #222;;transform:scale(0.5000,0.5);transform-origin:0 0;will-change:transform">Capital City, OH 12345-6123</span>
<span class="t" style="left:406.80px;top:263.59px;font-size:8.70px;color:#222;font-weight:bold;font-style:normal;-webkit-text-stroke:0.3px #222;;transform:scale(0.5000,0.5);transform-origin:0 0;will-change:transform">123-555-5678</span>
<span class="t" style="left:578.90px;top:244.66px;font-size:8.92px;color:#333;font-weight:normal;font-style:normal;-webkit-text-stroke:0.3px #333;;transform:scale(0.5000,0.5);transform-origin:0 0;will-change:transform">Account Name: <b>Small Business Checking</b></span>
<span class="t" style="left:578.90px;top:251.46px;font-size:8.92px;color:#333;font-weight:normal;font-style:normal;-webkit-text-stroke:0.3px #333;;transform:scale(0.5000,0.5);transform-origin:0 0;will-change:transform">Account Number: <b>000000012345</b></span>
<span class="t" style="left:578.90px;top:263.60px;font-size:9.36px;color:#333;font-weight:normal;font-style:normal;-webkit-text-stroke:0.3px #333;;transform:scale(0.5000,0.5);transform-origin:0 0;will-change:transform">Statement Period: 03/01/2023 to 04/01/2023</span>
<span class="t" style="left:406.80px;top:281.30px;font-size:10.00px;color:#2a4cc0;font-weight:bold;font-style:normal;-webkit-text-stroke:0.3px #2a4cc0;;transform:scale(0.5000,0.5);transform-origin:0 0;will-change:transform">ACCOUNT SUMMARY</span>
<span class="t" style="left:406.80px;top:292.66px;font-size:8.94px;color:#333;font-weight:normal;font-style:normal;-webkit-text-stroke:0.3px #333;;transform:scale(0.5000,0.5);transform-origin:0 0;will-change:transform">Balance on March 1:</span>
<span class="t" style="left:480.00px;top:292.65px;font-size:9.00px;color:#333;font-weight:normal;font-style:normal;-webkit-text-stroke:0.3px #333;;transform:scale(0.5000,0.5);transform-origin:0 0;will-change:transform">&#8377;27,584.38</span>
<span class="t" style="left:406.80px;top:299.46px;font-size:8.94px;color:#333;font-weight:normal;font-style:normal;-webkit-text-stroke:0.3px #333;;transform:scale(0.5000,0.5);transform-origin:0 0;will-change:transform">Total money in:</span>
<span class="t" style="left:480.00px;top:299.45px;font-size:9.00px;color:#333;font-weight:normal;font-style:normal;-webkit-text-stroke:0.3px #333;;transform:scale(0.5000,0.5);transform-origin:0 0;will-change:transform">&#8377;10,275.59</span>
<span class="t" style="left:406.80px;top:306.36px;font-size:8.94px;color:#333;font-weight:normal;font-style:normal;-webkit-text-stroke:0.3px #333;;transform:scale(0.5000,0.5);transform-origin:0 0;will-change:transform">Total money out:</span>
<span class="t" style="left:480.00px;top:306.35px;font-size:9.00px;color:#333;font-weight:normal;font-style:normal;-webkit-text-stroke:0.3px #333;;transform:scale(0.5000,0.5);transform-origin:0 0;will-change:transform">&#8377;10,580.17</span>
<span class="t" style="left:406.80px;top:313.66px;font-size:8.94px;color:#333;font-weight:normal;font-style:normal;-webkit-text-stroke:0.3px #333;;transform:scale(0.5000,0.5);transform-origin:0 0;will-change:transform">Balance on April 1:</span>
<span class="t" style="left:480.00px;top:313.65px;font-size:9.00px;color:#333;font-weight:normal;font-style:normal;-webkit-text-stroke:0.3px #333;;transform:scale(0.5000,0.5);transform-origin:0 0;will-change:transform">&#8377;27,347.70</span>
<div style="left:404px;top:326px;width:273px;height:15px;background:#0a3cc8"></div>
<div style="left:404px;top:341px;width:273px;height:8px;background:#574d4d"></div>
<span class="t" style="left:413.00px;top:332.30px;font-size:10.00px;color:#dfe5ff;font-weight:normal;font-style:normal;-webkit-text-stroke:0.3px #dfe5ff;;transform:scale(0.5000,0.5);transform-origin:0 0;will-change:transform">DATE</span>
<span class="t" style="left:439.00px;top:332.27px;font-size:10.20px;color:#dfe5ff;font-weight:normal;font-style:normal;-webkit-text-stroke:0.3px #dfe5ff;;transform:scale(0.4750,0.5);transform-origin:0 0;will-change:transform">DESCRIPTION</span>
<span class="t" style="left:553.90px;top:332.27px;font-size:10.20px;color:#dfe5ff;font-weight:normal;font-style:normal;-webkit-text-stroke:0.3px #dfe5ff;letter-spacing:-0.1px;transform:scale(0.5000,0.5);transform-origin:0 0;will-change:transform">WITHDRAWAL</span>
<span class="t" style="left:609.40px;top:332.30px;font-size:10.00px;color:#dfe5ff;font-weight:normal;font-style:normal;-webkit-text-stroke:0.3px #dfe5ff;;transform:scale(0.5000,0.5);transform-origin:0 0;will-change:transform">DEPOSIT</span>
<span class="t" style="left:-126.40px;width:800px;text-align:right;top:332.30px;font-size:10.00px;color:#dfe5ff;font-weight:normal;font-style:normal;-webkit-text-stroke:0.3px #dfe5ff;;transform:scale(0.5000,0.5);transform-origin:100% 0;will-change:transform">BALANCE</span>
<span class="t" style="left:439.30px;top:343.74px;font-size:10.40px;color:#f4f4f4;font-weight:bold;font-style:normal;-webkit-text-stroke:0.3px #f4f4f4;;transform:scale(0.4500,0.5);transform-origin:0 0;will-change:transform">Previous balance</span>
<span class="t" style="left:-130.20px;width:800px;text-align:right;top:343.83px;font-size:9.80px;color:#f4f4f4;font-weight:normal;font-style:normal;-webkit-text-stroke:0.3px #f4f4f4;;transform:scale(0.5000,0.5);transform-origin:100% 0;will-change:transform">27,584.38</span>
<span class="t" style="left:413.40px;top:353.15px;font-size:9.00px;color:#555;font-weight:normal;font-style:normal;-webkit-text-stroke:0.3px #555;;transform:scale(0.5000,0.5);transform-origin:0 0;will-change:transform">03/02</span>
<span class="t" style="left:439.30px;top:353.18px;font-size:8.80px;color:#333;font-weight:normal;font-style:normal;-webkit-text-stroke:0.3px #333;;transform:scale(0.5000,0.5);transform-origin:0 0;will-change:transform">Internet Bill</span>
<span class="t" style="left:553.90px;top:353.12px;font-size:9.20px;color:#222;font-weight:normal;font-style:normal;-webkit-text-stroke:0.45px #222;;transform:scale(0.5000,0.5);transform-origin:0 0;will-change:transform">75.99</span>
<span class="t" style="left:-130.50px;width:800px;text-align:right;top:353.12px;font-size:9.20px;color:#222;font-weight:normal;font-style:normal;-webkit-text-stroke:0.45px #222;;transform:scale(0.5000,0.5);transform-origin:100% 0;will-change:transform">27,508.39</span>
<div style="left:404px;top:360px;width:273px;height:11.0px;background:#eaf3fd"></div>
<span class="t" style="left:413.40px;top:364.15px;font-size:9.00px;color:#555;font-weight:normal;font-style:normal;-webkit-text-stroke:0.3px #555;;transform:scale(0.5000,0.5);transform-origin:0 0;will-change:transform">03/03</span>
<span class="t" style="left:439.30px;top:364.18px;font-size:8.80px;color:#333;font-weight:normal;font-style:normal;-webkit-text-stroke:0.3px #333;;transform:scale(0.5000,0.5);transform-origin:0 0;will-change:transform">Electric Bill</span>
<span class="t" style="left:553.90px;top:364.12px;font-size:9.20px;color:#222;font-weight:normal;font-style:normal;-webkit-text-stroke:0.45px #222;;transform:scale(0.5000,0.5);transform-origin:0 0;will-change:transform">253.68</span>
<span class="t" style="left:-130.50px;width:800px;text-align:right;top:364.12px;font-size:9.20px;color:#222;font-weight:normal;font-style:normal;-webkit-text-stroke:0.45px #222;;transform:scale(0.5000,0.5);transform-origin:100% 0;will-change:transform">27,254.71</span>
<span class="t" style="left:413.40px;top:379.00px;font-size:9.00px;color:#555;font-weight:normal;font-style:normal;-webkit-text-stroke:0.3px #555;;transform:scale(0.5000,0.5);transform-origin:0 0;will-change:transform">03/08</span>
<span class="t" style="left:439.30px;top:374.48px;font-size:8.80px;color:#333;font-weight:normal;font-style:normal;-webkit-text-stroke:0.3px #333;;transform:scale(0.5000,0.5);transform-origin:0 0;will-change:transform">Check No. 4598</span>
<span class="t" style="left:439.30px;top:382.28px;font-size:8.80px;color:#333;font-weight:normal;font-style:italic;-webkit-text-stroke:0.3px #333;;transform:scale(0.5000,0.5);transform-origin:0 0;will-change:transform">Payment from Lisa Williams</span>
<span class="t" style="left:219.50px;width:800px;text-align:center;top:374.42px;font-size:9.20px;color:#222;font-weight:normal;font-style:normal;-webkit-text-stroke:0.45px #222;;transform:scale(0.5000,0.5);transform-origin:50% 0;will-change:transform">456.84</span>
<span class="t" style="left:-130.50px;width:800px;text-align:right;top:374.42px;font-size:9.20px;color:#222;font-weight:normal;font-style:normal;-webkit-text-stroke:0.45px #222;;transform:scale(0.5000,0.5);transform-origin:100% 0;will-change:transform">27,711.55</span>
<div style="left:404px;top:389.7px;width:273px;height:10.7px;background:#eaf3fd"></div>
<span class="t" style="left:413.40px;top:393.70px;font-size:9.00px;color:#555;font-weight:normal;font-style:normal;-webkit-text-stroke:0.3px #555;;transform:scale(0.5000,0.5);transform-origin:0 0;will-change:transform">03/10</span>
<span class="t" style="left:439.30px;top:393.73px;font-size:8.80px;color:#333;font-weight:normal;font-style:normal;-webkit-text-stroke:0.3px #333;;transform:scale(0.5000,0.5);transform-origin:0 0;will-change:transform">Deposit from Credit Card Processor</span>
<span class="t" style="left:219.50px;width:800px;text-align:center;top:393.67px;font-size:9.20px;color:#222;font-weight:normal;font-style:normal;-webkit-text-stroke:0.45px #222;;transform:scale(0.5000,0.5);transform-origin:50% 0;will-change:transform">5,601.36</span>
<span class="t" style="left:-130.50px;width:800px;text-align:right;top:393.67px;font-size:9.20px;color:#222;font-weight:normal;font-style:normal;-webkit-text-stroke:0.45px #222;;transform:scale(0.5000,0.5);transform-origin:100% 0;will-change:transform">33,602.81</span>
<span class="t" style="left:413.40px;top:404.45px;font-size:9.00px;color:#555;font-weight:normal;font-style:normal;-webkit-text-stroke:0.3px #555;;transform:scale(0.5000,0.5);transform-origin:0 0;will-change:transform">03/12</span>
<span class="t" style="left:439.30px;top:404.48px;font-size:8.80px;color:#333;font-weight:normal;font-style:normal;-webkit-text-stroke:0.3px #333;;transform:scale(0.5000,0.5);transform-origin:0 0;will-change:transform">Payroll Run</span>
<span class="t" style="left:553.90px;top:404.42px;font-size:9.20px;color:#222;font-weight:normal;font-style:normal;-webkit-text-stroke:0.45px #222;;transform:scale(0.5000,0.5);transform-origin:0 0;will-change:transform">3,894.75</span>
<span class="t" style="left:-130.50px;width:800px;text-align:right;top:404.42px;font-size:9.20px;color:#222;font-weight:normal;font-style:normal;-webkit-text-stroke:0.45px #222;;transform:scale(0.5000,0.5);transform-origin:100% 0;will-change:transform">29,708.06</span>
<div style="left:404px;top:411.2px;width:273px;height:18.6px;background:#eaf3fd"></div>
<span class="t" style="left:413.40px;top:419.15px;font-size:9.00px;color:#555;font-weight:normal;font-style:normal;-webkit-text-stroke:0.3px #555;;transform:scale(0.5000,0.5);transform-origin:0 0;will-change:transform">03/14</span>
<span class="t" style="left:439.30px;top:414.68px;font-size:8.80px;color:#333;font-weight:normal;font-style:normal;-webkit-text-stroke:0.3px #333;;transform:scale(0.5000,0.5);transform-origin:0 0;will-change:transform">Debit Transaction</span>
<span class="t" style="left:439.30px;top:422.48px;font-size:8.80px;color:#333;font-weight:normal;font-style:italic;-webkit-text-stroke:0.3px #333;;transform:scale(0.5000,0.5);transform-origin:0 0;will-change:transform">Main Office Wholesale</span>
<span class="t" style="left:553.90px;top:414.62px;font-size:9.20px;color:#222;font-weight:normal;font-style:normal;-webkit-text-stroke:0.45px #222;;transform:scale(0.5000,0.5);transform-origin:0 0;will-change:transform">243.36</span>
<span class="t" style="left:-130.50px;width:800px;text-align:right;top:414.62px;font-size:9.20px;color:#222;font-weight:normal;font-style:normal;-webkit-text-stroke:0.45px #222;;transform:scale(0.5000,0.5);transform-origin:100% 0;will-change:transform">29,464.06</span>
<span class="t" style="left:413.40px;top:433.85px;font-size:9.00px;color:#555;font-weight:normal;font-style:normal;-webkit-text-stroke:0.3px #555;;transform:scale(0.5000,0.5);transform-origin:0 0;will-change:transform">03/21</span>
<span class="t" style="left:439.30px;top:433.88px;font-size:8.80px;color:#333;font-weight:normal;font-style:normal;-webkit-text-stroke:0.3px #333;;transform:scale(0.5000,0.5);transform-origin:0 0;will-change:transform">Rent Bill</span>
<span class="t" style="left:553.90px;top:433.82px;font-size:9.20px;color:#222;font-weight:normal;font-style:normal;-webkit-text-stroke:0.45px #222;;transform:scale(0.5000,0.5);transform-origin:0 0;will-change:transform">750.00</span>
<span class="t" style="left:219.50px;width:800px;text-align:center;top:433.82px;font-size:9.20px;color:#222;font-weight:normal;font-style:normal;-webkit-text-stroke:0.45px #222;;transform:scale(0.5000,0.5);transform-origin:50% 0;will-change:transform">268.84</span>
<span class="t" style="left:-130.50px;width:800px;text-align:right;top:433.82px;font-size:9.20px;color:#222;font-weight:normal;font-style:normal;-webkit-text-stroke:0.45px #222;;transform:scale(0.5000,0.5);transform-origin:100% 0;will-change:transform">28,714.00</span>
<div style="left:404px;top:440.6px;width:273px;height:17.6px;background:#eaf3fd"></div>
<span class="t" style="left:413.40px;top:448.05px;font-size:9.00px;color:#555;font-weight:normal;font-style:normal;-webkit-text-stroke:0.3px #555;;transform:scale(0.5000,0.5);transform-origin:0 0;will-change:transform">03/21</span>
<span class="t" style="left:439.30px;top:444.08px;font-size:8.80px;color:#333;font-weight:normal;font-style:normal;-webkit-text-stroke:0.3px #333;;transform:scale(0.5000,0.5);transform-origin:0 0;will-change:transform">Check No. 234</span>
<span class="t" style="left:439.30px;top:451.88px;font-size:8.80px;color:#333;font-weight:normal;font-style:italic;-webkit-text-stroke:0.3px #333;;transform:scale(0.5000,0.5);transform-origin:0 0;will-change:transform">Payment From Mark Moore</span>
<span class="t" style="left:-130.50px;width:800px;text-align:right;top:444.02px;font-size:9.20px;color:#222;font-weight:normal;font-style:normal;-webkit-text-stroke:0.45px #222;;transform:scale(0.5000,0.5);transform-origin:100% 0;will-change:transform">28,983.44</span>
<span class="t" style="left:413.40px;top:462.65px;font-size:9.00px;color:#555;font-weight:normal;font-style:normal;-webkit-text-stroke:0.3px #555;;transform:scale(0.5000,0.5);transform-origin:0 0;will-change:transform">03/26</span>
<span class="t" style="left:439.30px;top:462.68px;font-size:8.80px;color:#333;font-weight:normal;font-style:normal;-webkit-text-stroke:0.3px #333;;transform:scale(0.5000,0.5);transform-origin:0 0;will-change:transform">Payroll Run</span>
<span class="t" style="left:553.90px;top:462.62px;font-size:9.20px;color:#222;font-weight:normal;font-style:normal;-webkit-text-stroke:0.45px #222;;transform:scale(0.5000,0.5);transform-origin:0 0;will-change:transform">3,743.23</span>
<span class="t" style="left:-130.50px;width:800px;text-align:right;top:462.62px;font-size:9.20px;color:#222;font-weight:normal;font-style:normal;-webkit-text-stroke:0.45px #222;;transform:scale(0.5000,0.5);transform-origin:100% 0;will-change:transform">25,240.21</span>
<div style="left:404px;top:469.8px;width:273px;height:10.4px;background:#eaf3fd"></div>
<span class="t" style="left:413.40px;top:473.65px;font-size:9.00px;color:#555;font-weight:normal;font-style:normal;-webkit-text-stroke:0.3px #555;;transform:scale(0.5000,0.5);transform-origin:0 0;will-change:transform">03/28</span>
<span class="t" style="left:439.30px;top:473.68px;font-size:8.80px;color:#333;font-weight:normal;font-style:normal;-webkit-text-stroke:0.3px #333;;transform:scale(0.5000,0.5);transform-origin:0 0;will-change:transform">Deposit</span>
<span class="t" style="left:219.50px;width:800px;text-align:center;top:473.62px;font-size:9.20px;color:#222;font-weight:normal;font-style:normal;-webkit-text-stroke:0.45px #222;;transform:scale(0.5000,0.5);transform-origin:50% 0;will-change:transform">3,656.45</span>
<span class="t" style="left:-130.50px;width:800px;text-align:right;top:473.62px;font-size:9.20px;color:#222;font-weight:normal;font-style:normal;-webkit-text-stroke:0.45px #222;;transform:scale(0.5000,0.5);transform-origin:100% 0;will-change:transform">28,896.66</span>
<span class="t" style="left:413.40px;top:488.75px;font-size:9.00px;color:#555;font-weight:normal;font-style:normal;-webkit-text-stroke:0.3px #555;;transform:scale(0.5000,0.5);transform-origin:0 0;will-change:transform">03/29</span>
<span class="t" style="left:439.30px;top:483.68px;font-size:8.80px;color:#333;font-weight:normal;font-style:normal;-webkit-text-stroke:0.3px #333;;transform:scale(0.5000,0.5);transform-origin:0 0;will-change:transform">Debit Transaction</span>
<span class="t" style="left:439.30px;top:491.48px;font-size:8.80px;color:#333;font-weight:normal;font-style:italic;-webkit-text-stroke:0.3px #333;;transform:scale(0.5000,0.5);transform-origin:0 0;will-change:transform">ABC Business Supplies</span>
<span class="t" style="left:553.90px;top:483.62px;font-size:9.20px;color:#222;font-weight:normal;font-style:normal;-webkit-text-stroke:0.45px #222;;transform:scale(0.5000,0.5);transform-origin:0 0;will-change:transform">1,548.96</span>
<span class="t" style="left:-130.50px;width:800px;text-align:right;top:488.72px;font-size:9.20px;color:#222;font-weight:normal;font-style:normal;-webkit-text-stroke:0.45px #222;;transform:scale(0.5000,0.5);transform-origin:100% 0;will-change:transform">27,347.70</span>
<div style="left:404px;top:502px;width:273px;height:10.8px;background:#574d4d"></div>
<span class="t" style="left:439.00px;top:505.64px;font-size:10.40px;color:#f4f4f4;font-weight:bold;font-style:normal;-webkit-text-stroke:0.3px #f4f4f4;;transform:scale(0.4500,0.5);transform-origin:0 0;will-change:transform">Ending Balance</span>
<span class="t" style="left:-126.40px;width:800px;text-align:right;top:505.70px;font-size:10.00px;color:#f4f4f4;font-weight:bold;font-style:normal;-webkit-text-stroke:0.3px #f4f4f4;;transform:scale(0.5000,0.5);transform-origin:100% 0;will-change:transform">27,347.70</span>
</div>
<div style="left:858px;top:41px;width:222px;height:679px;background:#3f3f3f"></div>
<div style="left:1077px;top:48px;width:3px;height:672px;background:#4a4a4a"></div>
<div style="left:858px;top:61px;width:12px;height:651px;background:#4a4a4a"></div>
<svg style="left:885.5px;top:42px" width="6" height="5" viewBox="0 0 6 5"><path d="M2.8 0.5 L0.8 2.5 L2.8 4.5 M5.3 0.5 L3.3 2.5 L5.3 4.5" stroke="#d8d8d8" stroke-width="1" fill="none"/></svg>
<svg style="left:1065.5px;top:42px" width="6" height="5" viewBox="0 0 6 5"><path d="M0.7 0.5 L2.7 2.5 L0.7 4.5 M3.2 0.5 L5.2 2.5 L3.2 4.5" stroke="#d8d8d8" stroke-width="1" fill="none"/></svg>
<div style="left:871px;top:48px;width:25px;height:672px;background:#525252;border-right:1px solid #3d3d3d"></div>
<div style="left:871px;top:96.5px;width:24px;height:1.5px;background:#464646"></div>
<div style="left:871px;top:145px;width:24px;height:1.5px;background:#464646"></div>
<div style="left:871px;top:173px;width:24px;height:1.5px;background:#464646"></div>
<div style="left:871px;top:201.5px;width:24px;height:1.5px;background:#464646"></div>
<svg style="left:876px;top:57px" width="14" height="14" viewBox="0 0 14 14"><path d="M1 1.5h4M1 4h4M1 6.5h3M1 9h2" stroke="#e6e6e6" stroke-width="0.8"/><path d="M12.5 1.5 L6 8" stroke="#e6e6e6" stroke-width="1.6"/><path d="M6.5 8.5 Q4 9 3.5 12.5 Q7 12 7.5 9.5Z" fill="#e6e6e6"/></svg>
<svg style="left:876px;top:77px" width="14" height="14" viewBox="0 0 14 14"><circle cx="3.5" cy="4" r="2" fill="#e6e6e6"/><path d="M5 4h8M1 9.5h7" stroke="#e6e6e6" stroke-width="1"/><path d="M8 9.5 L12.5 6.5 V12.5Z" fill="#e6e6e6"/></svg>
<span class="t" style="left:877.00px;top:107.54px;font-size:12.65px;color:#e6e6e6;font-weight:normal;transform:scaleX(0.8696);transform-origin:0 0;font-family:Liberation Sans">A</span>
<div style="left:887px;top:106px;width:1px;height:12px;background:#e6e6e6"></div>
<span class="t" style="left:877.50px;top:127.44px;font-size:12.65px;color:#e6e6e6;font-weight:bold;transform:scaleX(0.8696);transform-origin:0 0;">&#182;</span>
<span class="t" style="left:876.50px;top:156.00px;font-size:12.50px;color:#e6e6e6;font-weight:normal;transform:scaleX(1.0000);transform-origin:0 0;font-family:Liberation Serif;font-style:italic">A</span>
<svg style="left:876px;top:153.5px" width="14" height="5" viewBox="0 0 16 6"><path d="M1 4 Q4 0.5 9 2 Q12 3 15 1" stroke="#e6e6e6" stroke-width="1" fill="none"/></svg>
<svg style="left:876px;top:182px" width="14" height="14" viewBox="0 0 14 14"><path d="M7 1 L12.5 4 V10 L7 13 L1.5 10 V4Z M1.5 4 L7 7 L12.5 4 M7 7 V13" stroke="#cfcfcf" stroke-width="1.1" fill="none"/></svg>
<div style="left:896px;top:48px;width:179px;height:337.5px;background:#535353"></div>
<div style="left:896px;top:48px;width:179px;height:20px;background:#424242"></div>
<div style="left:1009px;top:48px;width:40px;height:20px;background:#535353"></div>
<span class="t" style="left:902.00px;top:55.10px;font-size:7.24px;color:#a8a8a8;font-weight:normal;transform:scaleX(0.8696);transform-origin:0 0;">Swatc</span>
<span class="t" style="left:924.50px;top:55.10px;font-size:7.24px;color:#a8a8a8;font-weight:normal;transform:scaleX(0.8696);transform-origin:0 0;">Gradi</span>
<span class="t" style="left:946.80px;top:55.10px;font-size:7.24px;color:#a8a8a8;font-weight:normal;transform:scaleX(0.8696);transform-origin:0 0;">Patter</span>
<span class="t" style="left:969.00px;top:55.10px;font-size:7.24px;color:#a8a8a8;font-weight:normal;transform:scaleX(0.8696);transform-origin:0 0;">Histor</span>
<span class="t" style="left:991.50px;top:55.10px;font-size:7.24px;color:#a8a8a8;font-weight:normal;transform:scaleX(0.8696);transform-origin:0 0;">Actio</span>
<span class="t" style="left:1013.80px;top:55.10px;font-size:7.24px;color:#f2f2f2;font-weight:bold;transform:scaleX(0.8696);transform-origin:0 0;">Properties</span>
<div style="left:1065px;top:55.5px;width:7px;height:1.2px;background:#bdbdbd"></div>
<div style="left:1065px;top:57.7px;width:7px;height:1.2px;background:#bdbdbd"></div>
<div style="left:1065px;top:59.9px;width:7px;height:1.2px;background:#bdbdbd"></div>
<div style="left:903px;top:73px;width:13px;height:15px;background:#3b3b3b"></div>
<svg style="left:905px;top:75px" width="9" height="11" viewBox="0 0 9 11"><path d="M1 0.8 H5.5 L8 3.3 V10.2 H1Z M5.5 0.8 V3.3 H8" stroke="#dcdcdc" stroke-width="1" fill="none" stroke-linejoin="miter"/></svg>
<span class="t" style="left:920.00px;top:79.06px;font-size:7.36px;color:#dcdcdc;font-weight:normal;transform:scaleX(0.8696);transform-origin:0 0;">Document</span>
<div style="left:896px;top:92px;width:179px;height:1px;background:#474747"></div>
<div style="left:1066px;top:94px;width:8px;height:274px;background:#4a4a4a"></div>
<div style="left:1067px;top:104.5px;width:6px;height:222px;background:#5e5e5e"></div>
<div style="left:1067px;top:327px;width:6px;height:41px;background:#474747"></div>
<svg style="left:900px;top:100.4px" width="6" height="4" viewBox="0 0 6 4"><path d="M0.6 0.6 L3 3 L5.4 0.6" stroke="#9a9a9a" stroke-width="0.9" fill="none"/></svg>
<span class="t" style="left:910.50px;top:99.50px;font-size:7.24px;color:#ececec;font-weight:bold;transform:scaleX(0.8696);transform-origin:0 0;">Canvas</span>
<span class="t" style="left:931.40px;top:116.90px;font-size:7.24px;color:#bdbdbd;font-weight:normal;transform:scaleX(0.8696);transform-origin:0 0;">W</span>
<span class="t" style="left:931.40px;top:134.60px;font-size:7.24px;color:#bdbdbd;font-weight:normal;transform:scaleX(0.8696);transform-origin:0 0;">H</span>
<div style="left:939.5px;top:114.5px;width:30.5px;height:10.5px;background:#454545"></div>
<div style="left:939.5px;top:132px;width:30.5px;height:10.5px;background:#454545"></div>
<span class="t" style="left:941.50px;top:116.95px;font-size:7.13px;color:#e4e4e4;font-weight:normal;transform:scaleX(0.8696);transform-origin:0 0;">2232 px</span>
<span class="t" style="left:941.50px;top:134.65px;font-size:7.13px;color:#e4e4e4;font-weight:normal;transform:scaleX(0.8696);transform-origin:0 0;">2854 px</span>
<span class="t" style="left:980.50px;top:116.90px;font-size:7.24px;color:#9a9a9a;font-weight:normal;transform:scaleX(0.8696);transform-origin:0 0;">X</span>
<span class="t" style="left:980.50px;top:134.60px;font-size:7.24px;color:#9a9a9a;font-weight:normal;transform:scaleX(0.8696);transform-origin:0 0;">Y</span>
<div style="left:989.5px;top:114.5px;width:30.5px;height:10.5px;background:#4c4c4c"></div>
<div style="left:989.5px;top:132px;width:30.5px;height:10.5px;background:#4c4c4c"></div>
<span class="t" style="left:991.50px;top:116.95px;font-size:7.13px;color:#6e6e6e;font-weight:normal;transform:scaleX(0.8696);transform-origin:0 0;">0 px</span>
<span class="t" style="left:991.50px;top:134.65px;font-size:7.13px;color:#6e6e6e;font-weight:normal;transform:scaleX(0.8696);transform-origin:0 0;">0 px</span>
<svg style="left:907px;top:123px" width="6" height="11" viewBox="0 0 6 11"><path d="M3 0.8 A2 2 0 0 1 3 4.8 A2 2 0 0 1 3 0.8 M3 6 A2 2 0 0 1 3 10 A2 2 0 0 1 3 6 M3 3.8 V7" stroke="#c8c8c8" stroke-width="1" fill="none"/></svg>
<div style="left:939.5px;top:151.5px;width:12px;height:15px;background:#383838"></div>
<div style="left:942px;top:154px;width:7px;height:10px;border:1px solid #ddd"></div>
<div style="left:944px;top:157px;width:3px;height:6px;background:#ddd;border-radius:1px 1px 0 0"></div>
<div style="left:957px;top:154px;width:11px;height:9px;border:1px solid #ccc"></div>
<div style="left:961px;top:157px;width:3px;height:5px;background:#ccc"></div>
<span class="t" style="left:938.60px;top:177.19px;font-size:7.01px;color:#d8d8d8;font-weight:normal;transform:scaleX(0.8696);transform-origin:0 0;">Resolution: 250 pixels/inch</span>
<span class="t" style="left:634.00px;width:300px;text-align:right;top:194.40px;font-size:7.24px;color:#c8c8c8;font-weight:normal;transform:scaleX(0.8696);transform-origin:100% 0;">Mode</span>
<div style="left:939px;top:193px;width:82px;height:12.5px;background:#454545"></div>
<span class="t" style="left:942.50px;top:196.40px;font-size:7.13px;color:#e2e2e2;font-weight:normal;transform:scaleX(0.8696);transform-origin:0 0;">RGB Color</span>
<svg style="left:1015px;top:197.75px" width="5" height="4" viewBox="0 0 6 4"><path d="M0.6 0.6 L3 3 L5.4 0.6" stroke="#a8a8a8" stroke-width="0.9" fill="none"/></svg>
<div style="left:939px;top:209.8px;width:82px;height:13px;background:#454545"></div>
<span class="t" style="left:942.50px;top:213.45px;font-size:7.13px;color:#e2e2e2;font-weight:normal;transform:scaleX(0.8696);transform-origin:0 0;">16 Bits/Channel</span>
<svg style="left:1015px;top:214.8px" width="5" height="4" viewBox="0 0 6 4"><path d="M0.6 0.6 L3 3 L5.4 0.6" stroke="#a8a8a8" stroke-width="0.9" fill="none"/></svg>
<span class="t" style="left:634.00px;width:300px;text-align:right;top:232.10px;font-size:7.24px;color:#c8c8c8;font-weight:normal;transform:scaleX(0.8696);transform-origin:100% 0;">Fill</span>
<div style="left:938.5px;top:228.5px;width:11.5px;height:12px;background:#4a4a4a;border:1px solid #444"></div>
<div style="left:953.5px;top:229px;width:67.5px;height:11.5px;background:#454545"></div>
<span class="t" style="left:957.00px;top:231.90px;font-size:7.13px;color:#e2e2e2;font-weight:normal;transform:scaleX(0.8696);transform-origin:0 0;">Transparent</span>
<svg style="left:1015.0px;top:233.25px" width="5" height="4" viewBox="0 0 6 4"><path d="M0.6 0.6 L3 3 L5.4 0.6" stroke="#a8a8a8" stroke-width="0.9" fill="none"/></svg>
<div style="left:896px;top:247px;width:170px;height:1px;background:#474747"></div>
<svg style="left:900px;top:255.8px" width="6" height="4" viewBox="0 0 6 4"><path d="M0.6 0.6 L3 3 L5.4 0.6" stroke="#9a9a9a" stroke-width="0.9" fill="none"/></svg>
<span class="t" style="left:910.50px;top:254.90px;font-size:7.24px;color:#ececec;font-weight:bold;transform:scaleX(0.8696);transform-origin:0 0;">Rulers &amp; Grids</span>
<div style="left:903px;top:270.5px;width:15px;height:15.5px;background:#383838"></div>
<div style="left:906px;top:274px;width:9px;height:2px;background:#e0e0e0"></div><div style="left:906px;top:274px;width:2px;height:9px;background:#e0e0e0"></div>
<div style="left:925.5px;top:272px;width:11px;height:11px;border:1px solid #c8c8c8;background:repeating-linear-gradient(90deg,transparent 0 3px,#c8c8c8 3px 4px),repeating-linear-gradient(0deg,transparent 0 3px,#c8c8c8 3px 4px)"></div>
<div style="left:946px;top:272px;width:11px;height:12px;border:1px solid #bbb;background:#6a6a6a"></div>
<div style="left:975.5px;top:272px;width:45.5px;height:13px;background:#424242"></div>
<span class="t" style="left:979.00px;top:275.65px;font-size:7.13px;color:#d0d0d0;font-weight:normal;transform:scaleX(0.8696);transform-origin:0 0;">Pixels</span>
<svg style="left:1015.0px;top:277.0px" width="5" height="4" viewBox="0 0 6 4"><path d="M0.6 0.6 L3 3 L5.4 0.6" stroke="#a8a8a8" stroke-width="0.9" fill="none"/></svg>
<div style="left:896px;top:294px;width:170px;height:1px;background:#474747"></div>
<svg style="left:900px;top:303.3px" width="6" height="4" viewBox="0 0 6 4"><path d="M0.6 0.6 L3 3 L5.4 0.6" stroke="#9a9a9a" stroke-width="0.9" fill="none"/></svg>
<span class="t" style="left:910.50px;top:302.40px;font-size:7.24px;color:#ececec;font-weight:bold;transform:scaleX(0.8696);transform-origin:0 0;">Guides</span>
<div style="left:903px;top:317px;width:15px;height:16.5px;background:#383838"></div>
<div style="left:907px;top:319px;width:1px;height:12px;background:#ddd"></div><div style="left:911px;top:319px;width:1px;height:12px;background:#ddd"></div><div style="left:905px;top:323px;width:11px;height:1px;background:#ddd"></div><div style="left:905px;top:327px;width:11px;height:1px;background:#ddd"></div>
<div style="left:928px;top:319px;width:1px;height:12px;background:#ccc"></div><div style="left:931px;top:319px;width:1px;height:12px;background:#ccc"></div><div style="left:926px;top:323px;width:8px;height:1px;background:#ccc"></div><div style="left:933px;top:327px;width:4px;height:4px;background:#ccc"></div>
<div style="left:944.5px;top:317px;width:14.5px;height:16.5px;background:#383838"></div>
<div style="left:948px;top:319px;width:1px;height:12px;background:#ddd"></div><div style="left:950px;top:322px;width:7px;height:1px;background:#ddd"></div><div style="left:954px;top:323px;width:1px;height:7px;background:#ddd"></div>
<div style="left:975.5px;top:320px;width:45.5px;height:13.5px;background:#424242"></div>
<svg style="left:1015.0px;top:325.25px" width="5" height="4" viewBox="0 0 6 4"><path d="M0.6 0.6 L3 3 L5.4 0.6" stroke="#a8a8a8" stroke-width="0.9" fill="none"/></svg>
<div style="left:979px;top:326px;width:26px;height:1.3px;background:#e0e0e0"></div>
<div style="left:896px;top:341px;width:170px;height:1px;background:#474747"></div>
<svg style="left:900px;top:350.6px" width="6" height="4" viewBox="0 0 6 4"><path d="M0.6 0.6 L3 3 L5.4 0.6" stroke="#9a9a9a" stroke-width="0.9" fill="none"/></svg>
<span class="t" style="left:910.50px;top:349.70px;font-size:7.24px;color:#ececec;font-weight:bold;transform:scaleX(0.8696);transform-origin:0 0;">Quick Actions</span>
<div style="left:1069px;top:360px;width:0;height:0;border-left:2.5px solid transparent;border-right:2.5px solid transparent;border-top:3px solid #777"></div>
<div style="left:1069px;top:98px;width:0;height:0;border-left:2.5px solid transparent;border-right:2.5px solid transparent;border-bottom:3px solid #777"></div>
<div style="left:896px;top:385.5px;width:179px;height:334.5px;background:#535353"></div>
<div style="left:896px;top:385.5px;width:179px;height:21px;background:#424242"></div>
<div style="left:896px;top:385.5px;width:29px;height:21px;background:#535353"></div>
<span class="t" style="left:902.00px;top:393.60px;font-size:7.24px;color:#f0f0f0;font-weight:bold;transform:scaleX(0.8696);transform-origin:0 0;">Layers</span>
<div style="left:1065px;top:393.5px;width:7px;height:1.2px;background:#a8a8a8"></div>
<div style="left:1065px;top:395.7px;width:7px;height:1.2px;background:#a8a8a8"></div>
<div style="left:1065px;top:397.9px;width:7px;height:1.2px;background:#a8a8a8"></div>
<div style="left:899.5px;top:413px;width:52.5px;height:12.5px;background:#3d3d3d"></div>
<svg style="left:902px;top:415px" width="8" height="8" viewBox="0 0 8 8"><circle cx="3.2" cy="3.2" r="2.3" stroke="#ddd" stroke-width="1.1" fill="none"/><path d="M4.8 4.8 L7.3 7.3" stroke="#ddd" stroke-width="1.3"/></svg>
<span class="t" style="left:912.00px;top:416.40px;font-size:7.24px;color:#e0e0e0;font-weight:normal;transform:scaleX(0.8696);transform-origin:0 0;">Kind</span>
<svg style="left:946px;top:418px" width="5" height="4" viewBox="0 0 6 4"><path d="M0.6 0.6 L3 3 L5.4 0.6" stroke="#aaa" stroke-width="0.9" fill="none"/></svg>
<div style="left:958.5px;top:414px;width:9.5px;height:9px;border:1px solid #cfcfcf"></div><div style="left:960.5px;top:419px;width:5.5px;height:2.5px;background:#cfcfcf"></div>
<div style="left:974px;top:414.5px;width:9px;height:9px;border-radius:50%;border:1px solid #cfcfcf;background:linear-gradient(135deg,transparent 50%,#cfcfcf 50%)"></div>
<span class="t" style="left:990.00px;top:415.13px;font-size:10.92px;color:#dcdcdc;font-weight:normal;transform:scaleX(0.8696);transform-origin:0 0;font-family:Liberation Serif">T</span>
<div style="left:1004.5px;top:414.5px;width:9px;height:9px;border:1px solid #cfcfcf"></div>
<div style="left:1003.5px;top:413.5px;width:3px;height:3px;background:#cfcfcf"></div>
<div style="left:1011.5px;top:413.5px;width:3px;height:3px;background:#cfcfcf"></div>
<div style="left:1003.5px;top:421.5px;width:3px;height:3px;background:#cfcfcf"></div>
<div style="left:1011.5px;top:421.5px;width:3px;height:3px;background:#cfcfcf"></div>
<svg style="left:1019.5px;top:413.5px" width="9" height="11" viewBox="0 0 9 11"><path d="M1 0.8 H5.5 L8 3.3 V10.2 H1Z" stroke="#cfcfcf" stroke-width="1" fill="none"/><rect x="1" y="6" width="4" height="4" fill="#cfcfcf"/></svg>
<div style="left:1034.5px;top:410.5px;width:6.5px;height:6.5px;border-radius:50%;background:#e8e8e8"></div><div style="left:1036px;top:416px;width:3.5px;height:6px;background:#303030;border-radius:0 0 2px 2px"></div>
<div style="left:896px;top:428px;width:179px;height:1px;background:#474747"></div>
<div style="left:900px;top:433px;width:78px;height:13px;background:#4c4c4c"></div>
<span class="t" style="left:903.00px;top:436.60px;font-size:7.24px;color:#707070;font-weight:normal;transform:scaleX(0.8696);transform-origin:0 0;">Normal</span>
<span class="t" style="left:982.40px;top:436.60px;font-size:7.24px;color:#6e6e6e;font-weight:normal;transform:scaleX(0.8696);transform-origin:0 0;">Opacity:</span>
<div style="left:1010px;top:433px;width:19.5px;height:13px;background:#474747"></div>
<span class="t" style="left:1011.50px;top:436.74px;font-size:6.90px;color:#6a6a6a;font-weight:normal;transform:scaleX(0.8696);transform-origin:0 0;">100%</span>
<div style="left:1030px;top:433px;width:9.5px;height:13px;background:#4c4c4c"></div>
<div style="left:896px;top:448.5px;width:179px;height:1px;background:#474747"></div>
<span class="t" style="left:900.00px;top:456.10px;font-size:7.24px;color:#6e6e6e;font-weight:normal;transform:scaleX(0.8696);transform-origin:0 0;">Lock:</span>
<div style="left:920.5px;top:454px;width:8px;height:9px;background:repeating-conic-gradient(#bdbdbd 0 25%,transparent 0 50%) 0 0/4px 4px;opacity:.75"></div>
<svg style="left:933px;top:453.5px" width="9" height="11" viewBox="0 0 9 11"><path d="M8 0.8 L3.5 6" stroke="#bdbdbd" stroke-width="1.3"/><path d="M3.5 6 Q1.5 7 1 10 Q3.5 9.5 4.5 7Z" fill="#bdbdbd"/></svg>
<svg style="left:946.5px;top:453.5px" width="11" height="11" viewBox="0 0 11 11"><path d="M5.5 0.5v10M0.5 5.5h10" stroke="#bdbdbd" stroke-width="1"/></svg>
<svg style="left:960px;top:454px" width="10" height="10" viewBox="0 0 10 10"><path d="M0.8 2 H5 L9 6 V9 H0.8Z" stroke="#bdbdbd" stroke-width="0.9" fill="none"/></svg>
<div style="left:975.5px;top:457.5px;width:8px;height:6px;background:#bdbdbd;border-radius:1px"></div><div style="left:977px;top:453.5px;width:5px;height:5px;border:1px solid #bdbdbd;border-bottom:none;border-radius:2.5px 2.5px 0 0"></div>
<span class="t" style="left:996.70px;top:456.10px;font-size:7.24px;color:#6e6e6e;font-weight:normal;transform:scaleX(0.8696);transform-origin:0 0;">Fill:</span>
<div style="left:1010px;top:453px;width:19.5px;height:12px;background:#474747"></div>
<span class="t" style="left:1011.50px;top:456.24px;font-size:6.90px;color:#6a6a6a;font-weight:normal;transform:scaleX(0.8696);transform-origin:0 0;">100%</span>
<div style="left:1030px;top:453px;width:9.5px;height:12px;background:#4c4c4c"></div>
<div style="left:896px;top:467px;width:170px;height:238px;background:#535353"></div>
<div style="left:914px;top:467px;width:1px;height:238px;background:#4a4a4a"></div>
<div style="left:896px;top:487.0px;width:170px;height:1px;background:#474747"></div>
<svg style="left:901.5px;top:474.0px" width="9" height="6" viewBox="0 0 9 6"><path d="M0.5 3 Q4.5 -1.5 8.5 3 Q4.5 7.5 0.5 3Z" stroke="#9a9a9a" stroke-width="0.9" fill="none"/><circle cx="4.5" cy="3" r="1.3" fill="#9a9a9a"/></svg>
<svg style="left:926.5px;top:475.5px" width="6" height="4" viewBox="0 0 6 4"><path d="M0.6 0.6 L3 3 L5.4 0.6" stroke="#999" stroke-width="0.9" fill="none"/></svg>
<div style="left:935.5px;top:473.5px;width:8.5px;height:7px;background:#e6e6e6"></div><div style="left:935.5px;top:472.0px;width:4px;height:2px;background:#e6e6e6"></div>
<span class="t" style="left:950.80px;top:474.10px;font-size:7.24px;color:#ececec;font-weight:normal;transform:scaleX(0.8696);transform-origin:0 0;">edite text</span>
<div style="left:896px;top:514.7px;width:170px;height:1px;background:#474747"></div>
<svg style="left:901.5px;top:498.1px" width="9" height="6" viewBox="0 0 9 6"><path d="M0.5 3 Q4.5 -1.5 8.5 3 Q4.5 7.5 0.5 3Z" stroke="#9a9a9a" stroke-width="0.9" fill="none"/><circle cx="4.5" cy="3" r="1.3" fill="#9a9a9a"/></svg>
<span class="t" style="left:942.30px;top:495.58px;font-size:13.80px;color:#e8e8e8;font-weight:normal;transform:scaleX(0.8696);transform-origin:0 0;font-family:Liberation Serif">T</span>
<span class="t" style="left:963.00px;top:498.20px;font-size:7.24px;color:#ececec;font-weight:normal;transform:scaleX(0.8696);transform-origin:0 0;">Layer 2</span>
<div style="left:896px;top:544.3px;width:170px;height:1px;background:#474747"></div>
<svg style="left:901.5px;top:526.6px" width="9" height="6" viewBox="0 0 9 6"><path d="M0.5 3 Q4.5 -1.5 8.5 3 Q4.5 7.5 0.5 3Z" stroke="#9a9a9a" stroke-width="0.9" fill="none"/><circle cx="4.5" cy="3" r="1.3" fill="#9a9a9a"/></svg>
<div style="left:938px;top:519.8px;width:15.5px;height:20.2px;background-color:#fff;background-image:linear-gradient(45deg,#d0d0d0 25%,transparent 25%,transparent 75%,#d0d0d0 75%),linear-gradient(45deg,#d0d0d0 25%,transparent 25%,transparent 75%,#d0d0d0 75%);background-size:4px 4px;background-position:0 0,2px 2px"></div>
<div style="left:939px;top:521px;width:3px;height:4px;background:#8a4a3a"></div>
<span class="t" style="left:959.40px;top:526.75px;font-size:7.24px;color:#ececec;font-weight:normal;transform:scaleX(0.8696);transform-origin:0 0;">Layer 3</span>
<div style="left:896px;top:572.0px;width:170px;height:1px;background:#474747"></div>
<svg style="left:901.5px;top:555.1px" width="9" height="6" viewBox="0 0 9 6"><path d="M0.5 3 Q4.5 -1.5 8.5 3 Q4.5 7.5 0.5 3Z" stroke="#9a9a9a" stroke-width="0.9" fill="none"/><circle cx="4.5" cy="3" r="1.3" fill="#9a9a9a"/></svg>
<span class="t" style="left:942.30px;top:552.63px;font-size:13.80px;color:#e8e8e8;font-weight:normal;transform:scaleX(0.8696);transform-origin:0 0;font-family:Liberation Serif">T</span>
<span class="t" style="left:963.00px;top:555.25px;font-size:7.24px;color:#ececec;font-weight:normal;transform:scaleX(0.8696);transform-origin:0 0;">citta0000000...&lt;&lt;&lt;&lt;&lt;&lt;&lt;&lt;&lt;0 d</span>
<div style="left:896px;top:600.5px;width:170px;height:1px;background:#474747"></div>
<div style="left:902px;top:582.2px;width:7px;height:8px;border:1px solid #575757"></div>
<span class="t" style="left:942.30px;top:580.73px;font-size:13.80px;color:#e8e8e8;font-weight:normal;transform:scaleX(0.8696);transform-origin:0 0;font-family:Liberation Serif">T</span>
<span class="t" style="left:963.00px;top:583.35px;font-size:7.24px;color:#ececec;font-weight:normal;transform:scaleX(0.8696);transform-origin:0 0;">1aa</span>
<div style="left:896px;top:627.5px;width:170px;height:1px;background:#474747"></div>
<svg style="left:901.5px;top:611.0px" width="9" height="6" viewBox="0 0 9 6"><path d="M0.5 3 Q4.5 -1.5 8.5 3 Q4.5 7.5 0.5 3Z" stroke="#9a9a9a" stroke-width="0.9" fill="none"/><circle cx="4.5" cy="3" r="1.3" fill="#9a9a9a"/></svg>
<span class="t" style="left:942.30px;top:608.48px;font-size:13.80px;color:#e8e8e8;font-weight:normal;transform:scaleX(0.8696);transform-origin:0 0;font-family:Liberation Serif">T</span>
<span class="t" style="left:963.00px;top:611.10px;font-size:7.24px;color:#ececec;font-weight:normal;transform:scaleX(0.8696);transform-origin:0 0;">169</span>
<div style="left:896px;top:658.0px;width:170px;height:1px;background:#474747"></div>
<svg style="left:901.5px;top:639.8px" width="9" height="6" viewBox="0 0 9 6"><path d="M0.5 3 Q4.5 -1.5 8.5 3 Q4.5 7.5 0.5 3Z" stroke="#9a9a9a" stroke-width="0.9" fill="none"/><circle cx="4.5" cy="3" r="1.3" fill="#9a9a9a"/></svg>
<span class="t" style="left:942.30px;top:637.23px;font-size:13.80px;color:#e8e8e8;font-weight:normal;transform:scaleX(0.8696);transform-origin:0 0;font-family:Liberation Serif">T</span>
<span class="t" style="left:963.00px;top:639.85px;font-size:7.24px;color:#ececec;font-weight:normal;transform:scaleX(0.8696);transform-origin:0 0;">m</span>
<div style="left:896px;top:686.0px;width:170px;height:1px;background:#474747"></div>
<svg style="left:901.5px;top:669.0px" width="9" height="6" viewBox="0 0 9 6"><path d="M0.5 3 Q4.5 -1.5 8.5 3 Q4.5 7.5 0.5 3Z" stroke="#9a9a9a" stroke-width="0.9" fill="none"/><circle cx="4.5" cy="3" r="1.3" fill="#9a9a9a"/></svg>
<span class="t" style="left:942.30px;top:666.48px;font-size:13.80px;color:#e8e8e8;font-weight:normal;transform:scaleX(0.8696);transform-origin:0 0;font-family:Liberation Serif">T</span>
<span class="t" style="left:963.00px;top:669.10px;font-size:7.24px;color:#ececec;font-weight:normal;transform:scaleX(0.8696);transform-origin:0 0;">129 1 a</span>
<div style="left:896px;top:715.0px;width:170px;height:1px;background:#474747"></div>
<svg style="left:901.5px;top:697.5px" width="9" height="6" viewBox="0 0 9 6"><path d="M0.5 3 Q4.5 -1.5 8.5 3 Q4.5 7.5 0.5 3Z" stroke="#9a9a9a" stroke-width="0.9" fill="none"/><circle cx="4.5" cy="3" r="1.3" fill="#9a9a9a"/></svg>
<span class="t" style="left:942.30px;top:694.98px;font-size:13.80px;color:#e8e8e8;font-weight:normal;transform:scaleX(0.8696);transform-origin:0 0;font-family:Liberation Serif">T</span>
<span class="t" style="left:963.00px;top:697.60px;font-size:7.24px;color:#ececec;font-weight:normal;transform:scaleX(0.8696);transform-origin:0 0;">01.01.1990</span>
<div style="left:1066px;top:467px;width:8px;height:238px;background:#4a4a4a"></div>
<div style="left:1067px;top:490px;width:6px;height:65.5px;background:#5e5e5e"></div>
<div style="left:896px;top:705px;width:179px;height:15px;background:#535353;border-top:1px solid #474747"></div>
<svg style="left:947px;top:711px" width="11" height="6" viewBox="0 0 11 6"><path d="M4 0.8 H2.5 A2.2 2.2 0 0 0 2.5 5.2 H4 M7 0.8 H8.5 A2.2 2.2 0 0 1 8.5 5.2 H7 M3.5 3 H7.5" stroke="#8a8a8a" stroke-width="1" fill="none"/></svg>
<span class="t" style="left:966.00px;top:710.80px;font-size:8.00px;color:#8a8a8a;font-weight:normal;transform:scaleX(1.0000);transform-origin:0 0;font-family:Liberation Serif"><i>fx</i></span>
<div style="left:982px;top:709.5px;width:9px;height:8px;border:1px solid #d0d0d0;background:#535353"></div><div style="left:984.5px;top:711.5px;width:4px;height:4px;background:#d0d0d0;border-radius:50%"></div>
<div style="left:999.5px;top:709.5px;width:8.5px;height:8.5px;border-radius:50%;border:1px solid #d0d0d0;background:linear-gradient(135deg,#d0d0d0 50%,transparent 50%)"></div>
<div style="left:1016px;top:711px;width:9.5px;height:7px;background:#d0d0d0"></div><div style="left:1016px;top:709.5px;width:4px;height:2px;background:#d0d0d0"></div>
<div style="left:1033px;top:709px;width:8px;height:9.5px;border:1px solid #d0d0d0"></div><div style="left:1036.5px;top:711px;width:1px;height:4px;background:#d0d0d0"></div><div style="left:1035px;top:712.5px;width:4px;height:1px;background:#d0d0d0"></div>
<div style="left:1050.5px;top:711px;width:7px;height:8px;border:1px solid #6e6e6e;border-top:none"></div><div style="left:1049.5px;top:709.5px;width:9px;height:1px;background:#6e6e6e"></div>
</body></html>
